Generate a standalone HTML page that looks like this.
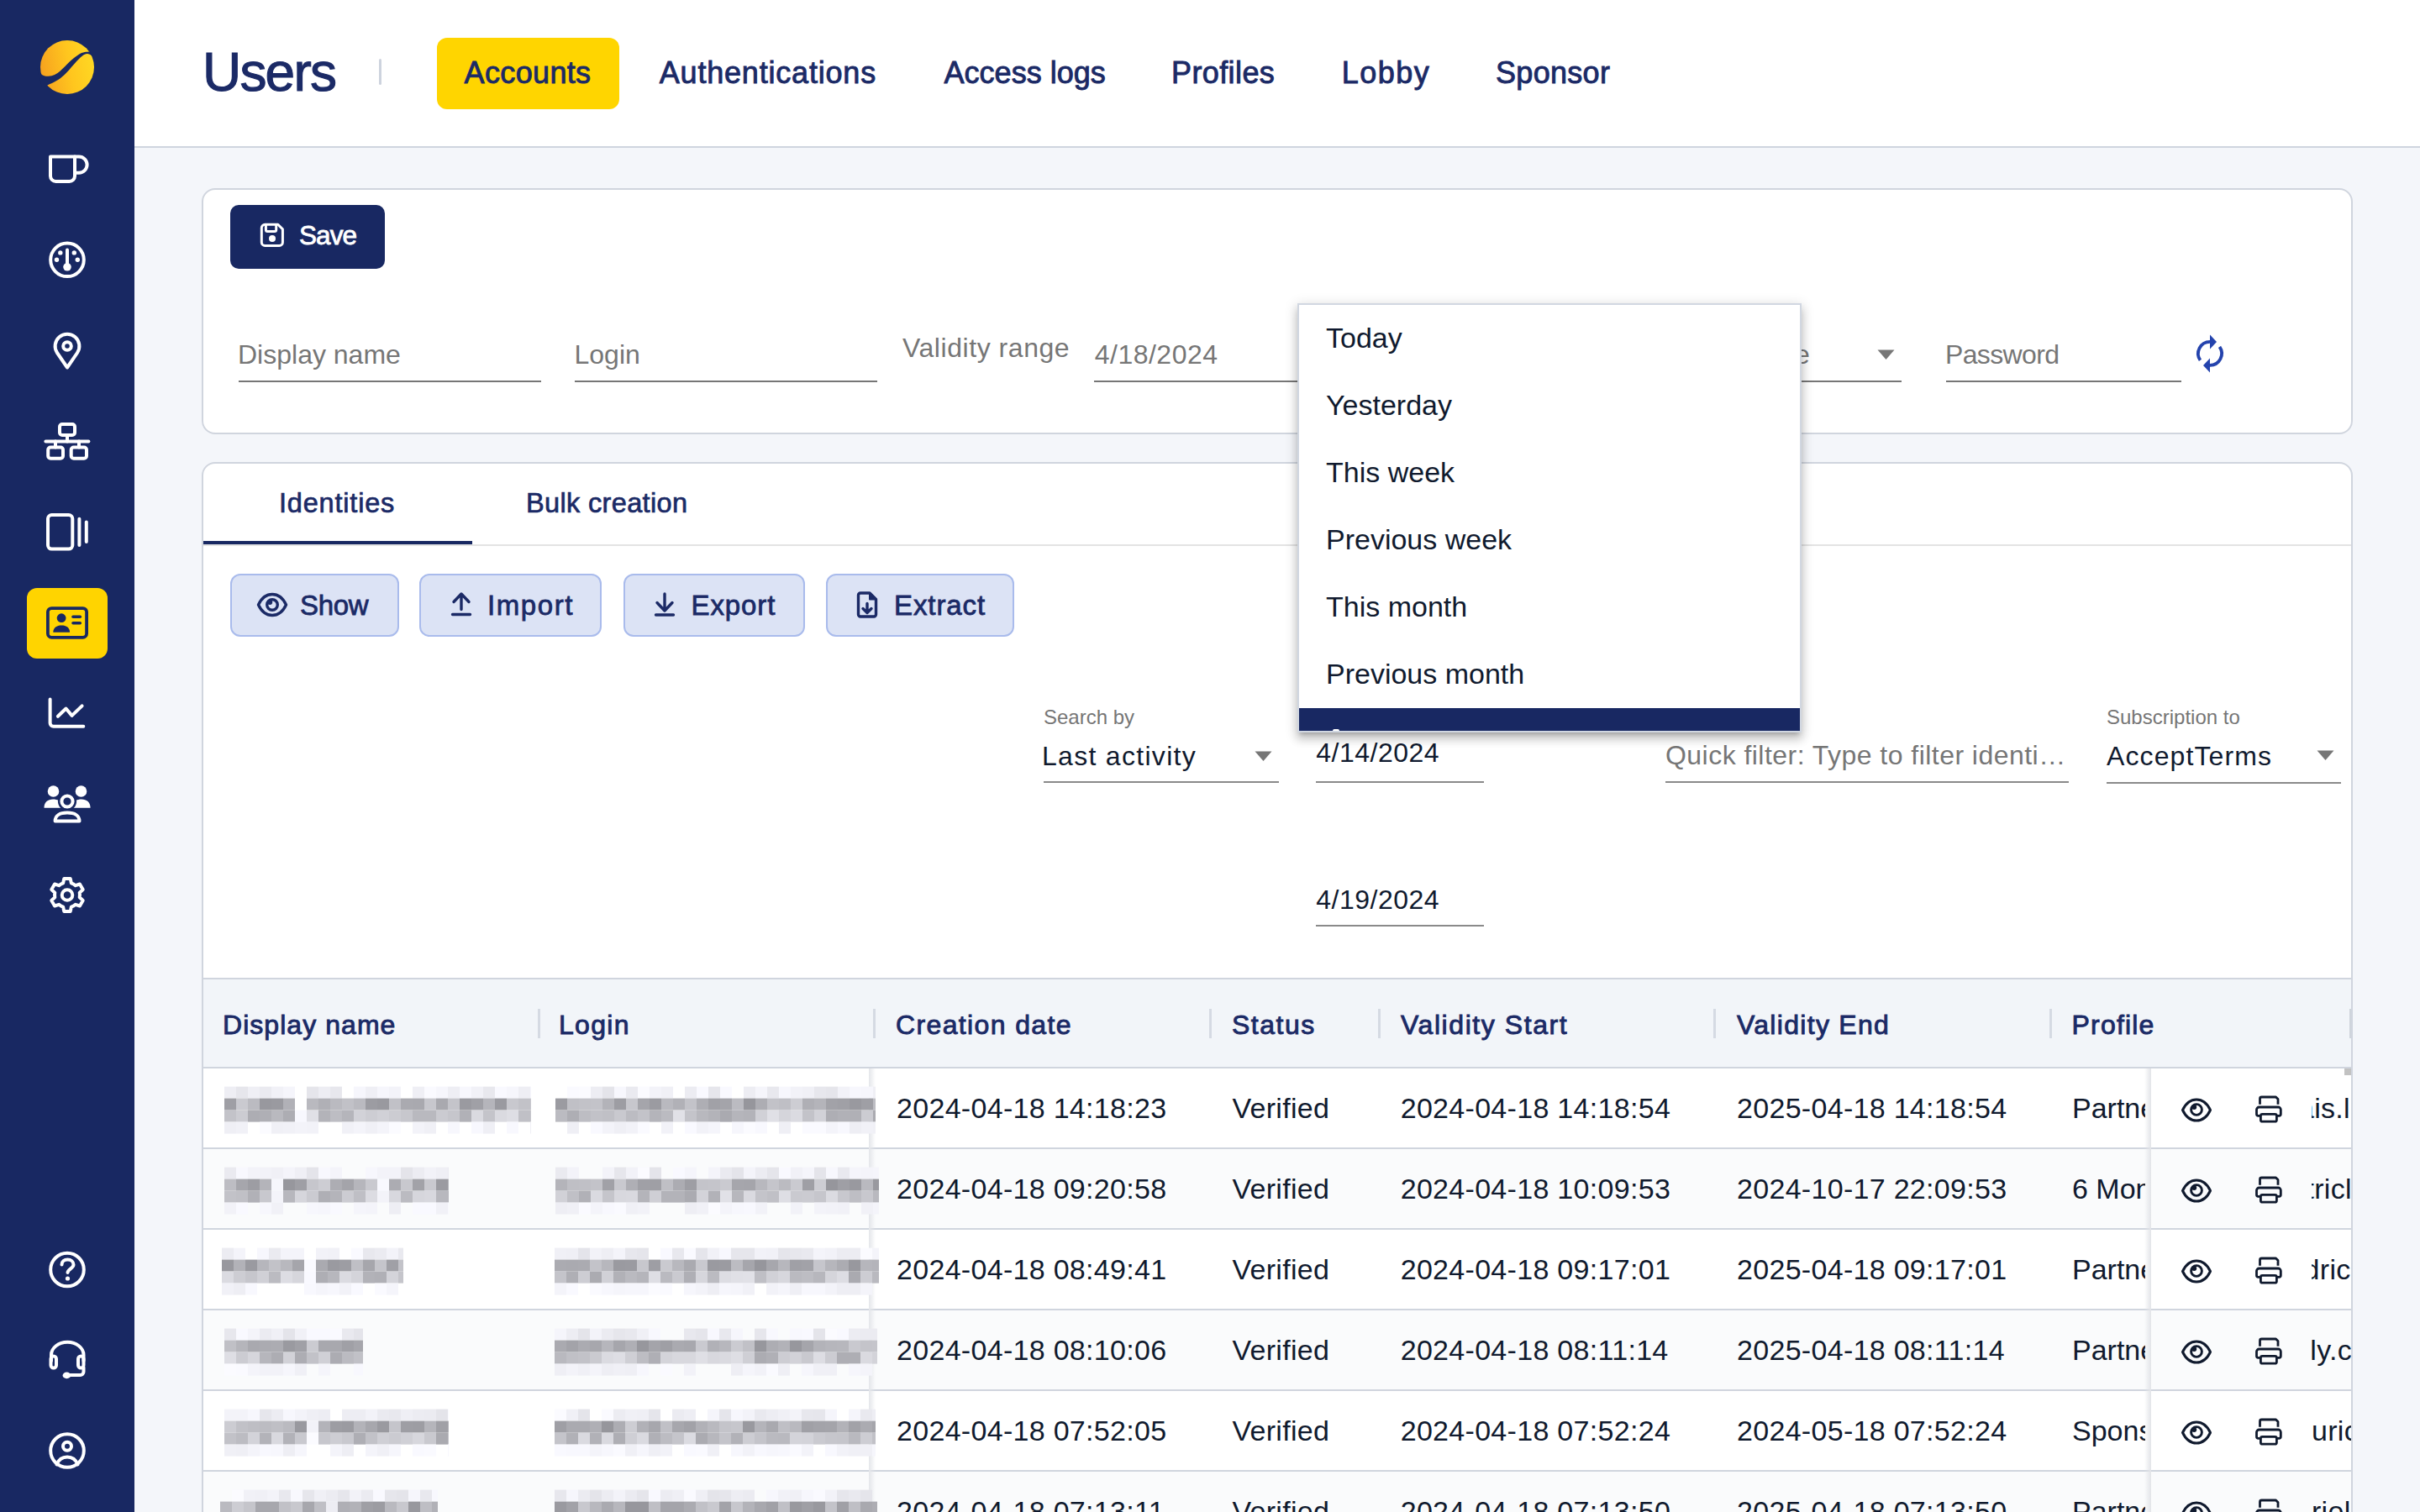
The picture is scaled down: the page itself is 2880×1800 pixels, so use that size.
<!DOCTYPE html>
<html><head><meta charset="utf-8"><style>
html,body{margin:0;padding:0;}
body{width:2880px;height:1800px;position:relative;overflow:hidden;background:#f4f6fa;font-family:"Liberation Sans",sans-serif;}
.t{position:absolute;white-space:nowrap;line-height:1;}
</style></head><body>
<div style="position:absolute;left:0px;top:0px;width:160px;height:1800px;background:#182862"></div>
<svg style="position:absolute;left:0;top:0" width="160" height="1800" viewBox="0 0 160 1800">
<defs><linearGradient id="lg" x1="0" y1="0.6" x2="1" y2="0.4"><stop offset="0" stop-color="#f6a11f"/><stop offset="0.55" stop-color="#ffc61e"/><stop offset="1" stop-color="#ffd823"/></linearGradient></defs>
<circle cx="80" cy="80" r="32" fill="url(#lg)"/>
<path d="M44,81 C47,88 51,91 57.5,90.8 C63,90.5 67.5,88 71.7,84.4 C75.5,81 79,77 82.3,73.9 C86,70.5 89.5,67.5 92.9,65.4 C96,63.5 98.5,62.3 100.8,62 C103,61.7 105,61.5 106.5,61.5 L111,64 L109.3,66.5 C108,65 105.5,64 103.5,64.1 C100.5,64.5 98,66.5 95.6,68.6 C92.5,71.5 90,74.5 87.6,77 C84,81 80.5,85.5 77,88.7 C73.5,92 70,94.5 66.5,96.6 C63,98.6 59.5,100 56.4,101.4 L50,104 Z" fill="#182862"/>
<!-- mug -->
<path d="M60,186.5 H89 V209.5 a6.5,6.5 0 0 1 -6.5,6.5 H66.5 a6.5,6.5 0 0 1 -6.5,-6.5 Z" fill="none" stroke="#fff" stroke-width="4" stroke-linecap="round" stroke-linejoin="round"/>
<path d="M89,186.5 H94 a9.6,9.6 0 0 1 0,19.2 H89" fill="none" stroke="#fff" stroke-width="4" stroke-linecap="round" stroke-linejoin="round"/>
<!-- gauge -->
<circle cx="80" cy="309.3" r="19.8" fill="none" stroke="#fff" stroke-width="4" stroke-linecap="round" stroke-linejoin="round"/>
<line x1="80" y1="297.5" x2="80" y2="316" fill="none" stroke="#fff" stroke-width="4" stroke-linecap="round" stroke-linejoin="round"/>
<circle cx="80" cy="317.8" r="4.8" fill="#fff"/>
<circle cx="71.8" cy="300.9" r="2.7" fill="#fff"/><circle cx="88.3" cy="300.9" r="2.7" fill="#fff"/>
<circle cx="67.5" cy="309.3" r="2.7" fill="#fff"/><circle cx="92.3" cy="309.3" r="2.7" fill="#fff"/>
<!-- pin -->
<path d="M80,437.5 L68,420 A14.4,14.4 0 1 1 92,420 Z" fill="none" stroke="#fff" stroke-width="4" stroke-linecap="round" stroke-linejoin="round"/>
<circle cx="80" cy="412" r="4.8" fill="none" stroke="#fff" stroke-width="4" stroke-linecap="round" stroke-linejoin="round"/>
<!-- network -->
<rect x="71" y="505" width="18" height="13" rx="3" fill="none" stroke="#fff" stroke-width="4" stroke-linecap="round" stroke-linejoin="round"/>
<line x1="80" y1="518" x2="80" y2="525.4" fill="none" stroke="#fff" stroke-width="4" stroke-linecap="round" stroke-linejoin="round"/>
<line x1="54.4" y1="525.4" x2="105.4" y2="525.4" fill="none" stroke="#fff" stroke-width="4" stroke-linecap="round" stroke-linejoin="round"/>
<line x1="66" y1="525.4" x2="66" y2="532.5" fill="none" stroke="#fff" stroke-width="4" stroke-linecap="round" stroke-linejoin="round"/><line x1="94" y1="525.4" x2="94" y2="532.5" fill="none" stroke="#fff" stroke-width="4" stroke-linecap="round" stroke-linejoin="round"/>
<rect x="57.2" y="532.5" width="17.8" height="13.2" rx="3" fill="none" stroke="#fff" stroke-width="4" stroke-linecap="round" stroke-linejoin="round"/>
<rect x="84.7" y="532.5" width="18.3" height="13.2" rx="3" fill="none" stroke="#fff" stroke-width="4" stroke-linecap="round" stroke-linejoin="round"/>
<!-- tablet -->
<rect x="57" y="613" width="29.3" height="40.6" rx="4.5" fill="none" stroke="#fff" stroke-width="4" stroke-linecap="round" stroke-linejoin="round"/>
<line x1="94.4" y1="617.7" x2="94.4" y2="649" fill="none" stroke="#fff" stroke-width="4" stroke-linecap="round" stroke-linejoin="round"/>
<line x1="102.8" y1="621.4" x2="102.8" y2="645" fill="none" stroke="#fff" stroke-width="4" stroke-linecap="round" stroke-linejoin="round"/>
<!-- active -->
<rect x="32" y="700" width="96" height="84" rx="12" fill="#ffd400"/>
<rect x="56.9" y="724.1" width="46.2" height="34.7" rx="4.5" fill="none" stroke="#182862" stroke-width="3.8"/>
<circle cx="73.1" cy="735.7" r="5.4" fill="#182862"/>
<path d="M63.3,752.8 C63.3,747 67.5,744.4 73.2,744.4 C79,744.4 83.1,747 83.1,752.8 Z" fill="#182862"/>
<line x1="87" y1="734.3" x2="95.3" y2="734.3" stroke="#182862" stroke-width="3.6" stroke-linecap="round"/>
<line x1="87" y1="741.7" x2="95.3" y2="741.7" stroke="#182862" stroke-width="3.6" stroke-linecap="round"/>
<!-- chart -->
<path d="M59.6,832.6 V860.7 a4,4 0 0 0 4,4 H99.3" fill="none" stroke="#fff" stroke-width="4" stroke-linecap="round" stroke-linejoin="round"/>
<path d="M68.9,852.8 L78.5,843.5 L85.6,851.9 L97.6,840.4" fill="none" stroke="#fff" stroke-width="4" stroke-linecap="round" stroke-linejoin="round"/>
<!-- people -->
<circle cx="63.5" cy="942" r="6.8" fill="#fff"/><circle cx="96.5" cy="942" r="6.8" fill="#fff"/>
<path d="M52.5,961.7 C52.5,955 57,951.5 63,951.5 C66,951.5 68,952 69.5,953 C70.5,956 72,959.5 73,961.7 Z" fill="#fff"/>
<path d="M107.6,961.7 C107.6,955 103,951.5 97,951.5 C94,951.5 92,952 90.5,953 C89.5,956 88,959.5 87,961.7 Z" fill="#fff"/>
<circle cx="80" cy="954" r="6.6" fill="none" stroke="#182862" stroke-width="9"/><circle cx="80" cy="954" r="6.6" fill="none" stroke="#fff" stroke-width="4" stroke-linecap="round" stroke-linejoin="round"/>
<path d="M65.6,977.5 C65.6,971 71,967.6 80,967.6 C89,967.6 94.5,971 94.5,977.5 Z" fill="none" stroke="#182862" stroke-width="8"/><path d="M65.6,977.5 C65.6,971 71,967.6 80,967.6 C89,967.6 94.5,971 94.5,977.5 Z" fill="none" stroke="#fff" stroke-width="4" stroke-linecap="round" stroke-linejoin="round"/>
<!-- gear -->
<g transform="translate(80,1065.5)"><path d="M-4.88,-14.18 L-3.78,-19.44 L3.78,-19.44 L4.88,-14.18 A15.00,15.00 0 0 1 9.84,-11.32 L14.94,-12.99 L18.72,-6.45 L14.72,-2.86 A15.00,15.00 0 0 1 14.72,2.86 L18.72,6.45 L14.94,12.99 L9.84,11.32 A15.00,15.00 0 0 1 4.88,14.18 L3.78,19.44 L-3.78,19.44 L-4.88,14.18 A15.00,15.00 0 0 1 -9.84,11.32 L-14.94,12.99 L-18.72,6.45 L-14.72,2.86 A15.00,15.00 0 0 1 -14.72,-2.86 L-18.72,-6.45 L-14.94,-12.99 L-9.84,-11.32 A15.00,15.00 0 0 1 -4.88,-14.18 Z" fill="none" stroke="#fff" stroke-width="4" stroke-linecap="round" stroke-linejoin="round"/><circle cx="0" cy="0" r="6.3" fill="none" stroke="#fff" stroke-width="4" stroke-linecap="round" stroke-linejoin="round"/></g>
<!-- help -->
<circle cx="80" cy="1511.5" r="19.8" fill="none" stroke="#fff" stroke-width="4" stroke-linecap="round" stroke-linejoin="round"/>
<path d="M73.5,1505.5 C73.5,1501.5 76.5,1499.5 80.5,1499.5 C84.5,1499.5 87.5,1502 87.5,1505.5 C87.5,1510 81,1510.5 80.5,1515" fill="none" stroke="#fff" stroke-width="4" stroke-linecap="round" stroke-linejoin="round" stroke-width="3.8"/>
<circle cx="80.5" cy="1522" r="2.6" fill="#fff"/>
<!-- headset -->
<path d="M61,1620 V1613 A19,15 0 0 1 99.5,1613 V1620" fill="none" stroke="#fff" stroke-width="4" stroke-linecap="round" stroke-linejoin="round"/>
<rect x="60.5" y="1614.5" width="6.5" height="14" rx="3.2" fill="none" stroke="#fff" stroke-width="4" stroke-linecap="round" stroke-linejoin="round"/>
<rect x="93" y="1614.5" width="6.5" height="14" rx="3.2" fill="none" stroke="#fff" stroke-width="4" stroke-linecap="round" stroke-linejoin="round"/>
<path d="M99.5,1628 V1633 a4,4 0 0 1 -4,4 H82" fill="none" stroke="#fff" stroke-width="4" stroke-linecap="round" stroke-linejoin="round"/>
<ellipse cx="79.4" cy="1637.4" rx="4.8" ry="3.8" fill="#fff"/>
<!-- user -->
<circle cx="80" cy="1727" r="19.8" fill="none" stroke="#fff" stroke-width="4" stroke-linecap="round" stroke-linejoin="round"/>
<circle cx="80" cy="1721.7" r="5" fill="none" stroke="#fff" stroke-width="4" stroke-linecap="round" stroke-linejoin="round"/>
<path d="M67.5,1743.5 C70,1737 74,1734.5 80,1734.5 C86,1734.5 90,1737 92.5,1743.5" fill="none" stroke="#fff" stroke-width="4" stroke-linecap="round" stroke-linejoin="round"/>
</svg>
<div style="position:absolute;left:160px;top:0px;width:2720px;height:174px;background:#fff"></div>
<div style="position:absolute;left:160px;top:174px;width:2720px;height:2px;background:#cfd5df"></div>
<div class="t " style="left:241px;top:53.8px;font-size:64px;color:#1b2a66;font-weight:400;letter-spacing:-1.8px;-webkit-text-stroke:1.1px #1b2a66">Users</div>
<div style="position:absolute;left:451px;top:70px;width:3px;height:31px;background:#cdd3de;border-radius:2px"></div>
<div style="position:absolute;left:520px;top:45px;width:217px;height:85px;background:#ffd500;border-radius:12px"></div>
<div class="t " style="left:552.6px;top:68.5px;font-size:36px;color:#1b2a66;font-weight:400;-webkit-text-stroke:0.9px #1b2a66;letter-spacing:0.35px">Accounts</div>
<div class="t " style="left:784.8px;top:68.5px;font-size:36px;color:#1b2a66;font-weight:400;-webkit-text-stroke:0.9px #1b2a66;letter-spacing:0.8px">Authentications</div>
<div class="t " style="left:1123.6px;top:68.5px;font-size:36px;color:#1b2a66;font-weight:400;-webkit-text-stroke:0.9px #1b2a66;letter-spacing:0px">Access logs</div>
<div class="t " style="left:1394px;top:68.5px;font-size:36px;color:#1b2a66;font-weight:400;-webkit-text-stroke:0.9px #1b2a66;letter-spacing:0.4px">Profiles</div>
<div class="t " style="left:1596.7px;top:68.5px;font-size:36px;color:#1b2a66;font-weight:400;-webkit-text-stroke:0.9px #1b2a66;letter-spacing:1.5px">Lobby</div>
<div class="t " style="left:1780px;top:68.5px;font-size:36px;color:#1b2a66;font-weight:400;-webkit-text-stroke:0.9px #1b2a66;letter-spacing:0.3px">Sponsor</div>
<div style="position:absolute;left:160px;top:176px;width:2720px;height:1624px;background:#f4f6fa"></div>
<div style="position:absolute;left:240px;top:224px;width:2560px;height:293px;background:#fff;border:2px solid #d0d5de;border-radius:16px;box-sizing:border-box"></div>
<div style="position:absolute;left:274px;top:244px;width:184px;height:76px;background:#182862;border-radius:10px"></div>
<svg style="position:absolute;left:300px;top:256px" width="50" height="48" viewBox="0 0 50 48"><path d="M15.3,11.3 H30.8 L36.4,16.9 V32.4 a4,4 0 0 1 -4,4 H15.3 a4,4 0 0 1 -4,-4 V15.3 a4,4 0 0 1 4,-4 Z" fill="none" stroke="#fff" stroke-width="3" stroke-linejoin="round"/><path d="M16.4,11.3 V17.5 a2,2 0 0 0 2,2 H26.7 a2,2 0 0 0 2,-2 V11.3" fill="none" stroke="#fff" stroke-width="3"/><circle cx="24" cy="27.9" r="4" fill="#fff"/></svg>
<div class="t " style="left:356px;top:265.3px;font-size:31.5px;color:#fff;font-weight:400;letter-spacing:-0.9px;-webkit-text-stroke:0.8px #fff">Save</div>
<div class="t " style="left:283px;top:405.9px;font-size:32px;color:#767676;font-weight:400;">Display name</div>
<div style="position:absolute;left:284px;top:453px;width:360px;height:2px;background:#767676"></div>
<div class="t " style="left:683.5px;top:405.9px;font-size:32px;color:#767676;font-weight:400;">Login</div>
<div style="position:absolute;left:684px;top:453px;width:360px;height:2px;background:#767676"></div>
<div class="t " style="left:1074px;top:397.5px;font-size:32px;color:#767676;font-weight:400;letter-spacing:0.55px">Validity range</div>
<div class="t " style="left:1302.7px;top:405.9px;font-size:32px;color:#767676;font-weight:400;letter-spacing:0.5px">4/18/2024</div>
<div style="position:absolute;left:1302px;top:453px;width:258px;height:2px;background:#767676"></div>
<div class="t " style="left:2136px;top:405.9px;font-size:32px;color:#767676;font-weight:400;">e</div>
<div style="position:absolute;left:2120px;top:453px;width:143px;height:2px;background:#767676"></div>
<svg style="position:absolute;left:2234px;top:416px" width="22" height="13"><path d="M0.5,0.5 H20.5 L10.5,12 Z" fill="#767676"/></svg>
<div class="t " style="left:2315px;top:406.4px;font-size:32px;color:#767676;font-weight:400;letter-spacing:-0.65px">Password</div>
<div style="position:absolute;left:2316px;top:453px;width:280px;height:2px;background:#767676"></div>
<svg style="position:absolute;left:2600px;top:390px" width="60" height="60" viewBox="0 0 60 60"><g fill="none" stroke="#2443ad" stroke-width="3.8"><path d="M18.5,38.8 A14,14 0 0 1 30,16.8"/><path d="M41.5,22.8 A14,14 0 0 1 30,44.8"/></g><path d="M30,8.5 L38,17 L30,25.5 Z" fill="#2443ad"/><path d="M30,36.5 L22,45 L30,53.5 Z" fill="#2443ad"/></svg>
<div style="position:absolute;left:240px;top:550px;width:2560px;height:1350px;background:#fff;border:2px solid #d0d5de;border-radius:16px;box-sizing:border-box"></div>
<div class="t " style="left:332px;top:582.8px;font-size:32.5px;color:#1b2a66;font-weight:400;-webkit-text-stroke:0.7px #1b2a66;letter-spacing:0.8px">Identities</div>
<div class="t " style="left:626px;top:582.8px;font-size:32.5px;color:#1b2a66;font-weight:400;-webkit-text-stroke:0.7px #1b2a66;letter-spacing:0.35px">Bulk creation</div>
<div style="position:absolute;left:242px;top:648px;width:2556px;height:2px;background:#e3e3e3"></div>
<div style="position:absolute;left:242px;top:644px;width:320px;height:4px;background:#182862"></div>
<div style="position:absolute;left:274px;top:683px;width:201px;height:75px;background:#dce3f5;border:2px solid #a9bbec;border-radius:12px;box-sizing:border-box"></div>
<div class="t " style="left:357px;top:704.2px;font-size:33px;color:#1b2a66;font-weight:400;letter-spacing:-0.3px;-webkit-text-stroke:0.8px #1b2a66">Show</div>
<div style="position:absolute;left:499px;top:683px;width:217px;height:75px;background:#dce3f5;border:2px solid #a9bbec;border-radius:12px;box-sizing:border-box"></div>
<div class="t " style="left:580px;top:704.2px;font-size:33px;color:#1b2a66;font-weight:400;letter-spacing:1.5999999999999999px;-webkit-text-stroke:0.8px #1b2a66">Import</div>
<div style="position:absolute;left:742px;top:683px;width:216px;height:75px;background:#dce3f5;border:2px solid #a9bbec;border-radius:12px;box-sizing:border-box"></div>
<div class="t " style="left:822.5px;top:704.2px;font-size:33px;color:#1b2a66;font-weight:400;letter-spacing:0.8999999999999999px;-webkit-text-stroke:0.8px #1b2a66">Export</div>
<div style="position:absolute;left:983px;top:683px;width:224px;height:75px;background:#dce3f5;border:2px solid #a9bbec;border-radius:12px;box-sizing:border-box"></div>
<div class="t " style="left:1064px;top:704.2px;font-size:33px;color:#1b2a66;font-weight:400;letter-spacing:0.8999999999999999px;-webkit-text-stroke:0.8px #1b2a66">Extract</div>
<svg style="position:absolute;left:0;top:0" width="1300" height="800" viewBox="0 0 1300 800">
<path d="M307.5,720 C311,712.5 317,707.5 324,707.5 C331,707.5 337,712.5 340.5,720 C337,727.5 331,732.5 324,732.5 C317,732.5 311,727.5 307.5,720 Z" fill="none" stroke="#1b2a66" stroke-width="3.4" stroke-linecap="round" stroke-linejoin="round"/>
<circle cx="324" cy="720" r="6.3" fill="none" stroke="#1b2a66" stroke-width="3.4" stroke-linecap="round" stroke-linejoin="round"/><circle cx="321.2" cy="717" r="3" fill="#1b2a66"/>
<path d="M540,716.5 L549,707 L558,716.5 M549,707.5 V725.5 M538.5,731.5 H559.5" fill="none" stroke="#1b2a66" stroke-width="3.4" stroke-linecap="round" stroke-linejoin="round"/>
<path d="M782,717.5 L791,727 L800,717.5 M791,707 V726.5 M780.5,732 H801.5" fill="none" stroke="#1b2a66" stroke-width="3.4" stroke-linecap="round" stroke-linejoin="round"/>
<path d="M1024,706 H1035 L1042.5,713.5 V731.5 a2.5,2.5 0 0 1 -2.5,2.5 H1024 a2.5,2.5 0 0 1 -2.5,-2.5 V708.5 a2.5,2.5 0 0 1 2.5,-2.5 Z" fill="none" stroke="#1b2a66" stroke-width="3.4" stroke-linecap="round" stroke-linejoin="round" stroke-width="3.3"/>
<path d="M1035,706 L1042.5,713.5 H1035 Z" fill="#1b2a66" stroke="#1b2a66" stroke-width="2" stroke-linejoin="round"/>
<path d="M1032,718.5 V729 M1027,724.5 L1032,729.5 L1037,724.5" fill="none" stroke="#1b2a66" stroke-width="3.4" stroke-linecap="round" stroke-linejoin="round" stroke-width="3"/>
</svg>
<div class="t " style="left:1242px;top:841.7px;font-size:24px;color:#767676;font-weight:400;">Search by</div>
<div class="t " style="left:1240px;top:883.6px;font-size:32px;color:#101a2e;font-weight:400;letter-spacing:1.3px">Last activity</div>
<svg style="position:absolute;left:1493px;top:894px" width="22" height="13"><path d="M0.5,0.5 H20.5 L10.5,12 Z" fill="#767676"/></svg>
<div style="position:absolute;left:1242px;top:930px;width:280px;height:2px;background:#8a8a8a"></div>
<div class="t " style="left:1566.3px;top:880.3px;font-size:32px;color:#101a2e;font-weight:400;letter-spacing:0.5px">4/14/2024</div>
<div style="position:absolute;left:1566px;top:930px;width:200px;height:2px;background:#8a8a8a"></div>
<div class="t " style="left:1566.3px;top:1054.9px;font-size:32px;color:#101a2e;font-weight:400;letter-spacing:0.5px">4/19/2024</div>
<div style="position:absolute;left:1566px;top:1101px;width:200px;height:2px;background:#8a8a8a"></div>
<div class="t " style="left:1982px;top:883.4px;font-size:32px;color:#767676;font-weight:400;letter-spacing:0.46px">Quick filter: Type to filter identi…</div>
<div style="position:absolute;left:1982px;top:929.5px;width:480px;height:2.0px;background:#8a8a8a"></div>
<div class="t " style="left:2507px;top:842.3px;font-size:24px;color:#767676;font-weight:400;">Subscription to</div>
<div class="t " style="left:2507px;top:883.9px;font-size:32px;color:#101a2e;font-weight:400;letter-spacing:1.1px">AcceptTerms</div>
<svg style="position:absolute;left:2757px;top:893px" width="22" height="13"><path d="M0.5,0.5 H20.5 L10.5,12 Z" fill="#767676"/></svg>
<div style="position:absolute;left:2507px;top:930.5px;width:279px;height:2.0px;background:#8a8a8a"></div>
<div style="position:absolute;left:242px;top:1164px;width:2556px;height:2px;background:#d0d5de"></div>
<div style="position:absolute;left:242px;top:1166px;width:2556px;height:104px;background:#f2f5f9"></div>
<div style="position:absolute;left:242px;top:1270px;width:2556px;height:2px;background:#d0d5de"></div>
<div class="t " style="left:265px;top:1203.9px;font-size:32px;color:#1b2a66;font-weight:400;letter-spacing:1.05px;-webkit-text-stroke:0.9px #1b2a66">Display name</div>
<div class="t " style="left:665px;top:1203.9px;font-size:32px;color:#1b2a66;font-weight:400;letter-spacing:1.3px;-webkit-text-stroke:0.9px #1b2a66">Login</div>
<div class="t " style="left:1066px;top:1203.9px;font-size:32px;color:#1b2a66;font-weight:400;letter-spacing:1.37px;-webkit-text-stroke:0.9px #1b2a66">Creation date</div>
<div class="t " style="left:1466px;top:1203.9px;font-size:32px;color:#1b2a66;font-weight:400;letter-spacing:1.5px;-webkit-text-stroke:0.9px #1b2a66">Status</div>
<div class="t " style="left:1667px;top:1203.9px;font-size:32px;color:#1b2a66;font-weight:400;letter-spacing:1.57px;-webkit-text-stroke:0.9px #1b2a66">Validity Start</div>
<div class="t " style="left:2067px;top:1203.9px;font-size:32px;color:#1b2a66;font-weight:400;letter-spacing:1.3px;-webkit-text-stroke:0.9px #1b2a66">Validity End</div>
<div class="t " style="left:2465.5px;top:1203.9px;font-size:32px;color:#1b2a66;font-weight:400;letter-spacing:1.2px;-webkit-text-stroke:0.9px #1b2a66">Profile</div>
<div style="position:absolute;left:640px;top:1201px;width:3px;height:35px;background:#d5dae3"></div>
<div style="position:absolute;left:1039px;top:1201px;width:3px;height:35px;background:#d5dae3"></div>
<div style="position:absolute;left:1439px;top:1201px;width:3px;height:35px;background:#d5dae3"></div>
<div style="position:absolute;left:1640px;top:1201px;width:3px;height:35px;background:#d5dae3"></div>
<div style="position:absolute;left:2039px;top:1201px;width:3px;height:35px;background:#d5dae3"></div>
<div style="position:absolute;left:2439px;top:1201px;width:3px;height:35px;background:#d5dae3"></div>
<div style="position:absolute;left:2796px;top:1201px;width:2px;height:35px;background:#cfd4dc"></div>
<div style="position:absolute;left:242px;top:1272px;width:2556px;height:94px;background:#ffffff"></div>
<div style="position:absolute;left:242px;top:1366px;width:2556px;height:2px;background:#d0d5de"></div>
<div class="t " style="left:1067px;top:1301.8px;font-size:34px;color:#101a2e;font-weight:400;letter-spacing:0.3px">2024-04-18 14:18:23</div>
<div class="t " style="left:1466.4px;top:1301.8px;font-size:34px;color:#101a2e;font-weight:400;letter-spacing:0.3px">Verified</div>
<div class="t " style="left:1666.7px;top:1301.8px;font-size:34px;color:#101a2e;font-weight:400;letter-spacing:0.3px">2024-04-18 14:18:54</div>
<div class="t " style="left:2067px;top:1301.8px;font-size:34px;color:#101a2e;font-weight:400;letter-spacing:0.3px">2025-04-18 14:18:54</div>
<div style="position:absolute;left:2460px;top:1291.8px;width:92.5px;height:54px;overflow:hidden;"><div class="t" style="left:6px;top:10px;font-size:34px;color:#101a2e;letter-spacing:0px">Partner</div></div>
<div style="position:absolute;left:2751px;top:1291.8px;width:47px;height:54px;overflow:hidden;"><div class="t" style="left:-16px;top:10px;font-size:34px;color:#101a2e;letter-spacing:0.3px">ais.l</div></div>
<div style="position:absolute;left:242px;top:1368px;width:2556px;height:94px;background:#fafbfc"></div>
<div style="position:absolute;left:242px;top:1462px;width:2556px;height:2px;background:#d0d5de"></div>
<div class="t " style="left:1067px;top:1397.8px;font-size:34px;color:#101a2e;font-weight:400;letter-spacing:0.3px">2024-04-18 09:20:58</div>
<div class="t " style="left:1466.4px;top:1397.8px;font-size:34px;color:#101a2e;font-weight:400;letter-spacing:0.3px">Verified</div>
<div class="t " style="left:1666.7px;top:1397.8px;font-size:34px;color:#101a2e;font-weight:400;letter-spacing:0.3px">2024-04-18 10:09:53</div>
<div class="t " style="left:2067px;top:1397.8px;font-size:34px;color:#101a2e;font-weight:400;letter-spacing:0.3px">2024-10-17 22:09:53</div>
<div style="position:absolute;left:2460px;top:1387.8px;width:92.5px;height:54px;overflow:hidden;"><div class="t" style="left:6px;top:10px;font-size:34px;color:#101a2e;letter-spacing:0px">6 Months</div></div>
<div style="position:absolute;left:2751px;top:1387.8px;width:47px;height:54px;overflow:hidden;"><div class="t" style="left:-6.5px;top:10px;font-size:34px;color:#101a2e;letter-spacing:0.3px">tricl</div></div>
<div style="position:absolute;left:242px;top:1464px;width:2556px;height:94px;background:#ffffff"></div>
<div style="position:absolute;left:242px;top:1558px;width:2556px;height:2px;background:#d0d5de"></div>
<div class="t " style="left:1067px;top:1493.8px;font-size:34px;color:#101a2e;font-weight:400;letter-spacing:0.3px">2024-04-18 08:49:41</div>
<div class="t " style="left:1466.4px;top:1493.8px;font-size:34px;color:#101a2e;font-weight:400;letter-spacing:0.3px">Verified</div>
<div class="t " style="left:1666.7px;top:1493.8px;font-size:34px;color:#101a2e;font-weight:400;letter-spacing:0.3px">2024-04-18 09:17:01</div>
<div class="t " style="left:2067px;top:1493.8px;font-size:34px;color:#101a2e;font-weight:400;letter-spacing:0.3px">2025-04-18 09:17:01</div>
<div style="position:absolute;left:2460px;top:1483.8px;width:92.5px;height:54px;overflow:hidden;"><div class="t" style="left:6px;top:10px;font-size:34px;color:#101a2e;letter-spacing:0px">Partner</div></div>
<div style="position:absolute;left:2751px;top:1483.8px;width:47px;height:54px;overflow:hidden;"><div class="t" style="left:-9.4px;top:10px;font-size:34px;color:#101a2e;letter-spacing:0.3px">dric</div></div>
<div style="position:absolute;left:242px;top:1560px;width:2556px;height:94px;background:#fafbfc"></div>
<div style="position:absolute;left:242px;top:1654px;width:2556px;height:2px;background:#d0d5de"></div>
<div class="t " style="left:1067px;top:1589.8px;font-size:34px;color:#101a2e;font-weight:400;letter-spacing:0.3px">2024-04-18 08:10:06</div>
<div class="t " style="left:1466.4px;top:1589.8px;font-size:34px;color:#101a2e;font-weight:400;letter-spacing:0.3px">Verified</div>
<div class="t " style="left:1666.7px;top:1589.8px;font-size:34px;color:#101a2e;font-weight:400;letter-spacing:0.3px">2024-04-18 08:11:14</div>
<div class="t " style="left:2067px;top:1589.8px;font-size:34px;color:#101a2e;font-weight:400;letter-spacing:0.3px">2025-04-18 08:11:14</div>
<div style="position:absolute;left:2460px;top:1579.8px;width:92.5px;height:54px;overflow:hidden;"><div class="t" style="left:6px;top:10px;font-size:34px;color:#101a2e;letter-spacing:0px">Partner</div></div>
<div style="position:absolute;left:2751px;top:1579.8px;width:47px;height:54px;overflow:hidden;"><div class="t" style="left:-1.7px;top:10px;font-size:34px;color:#101a2e;letter-spacing:0.3px">ly.c</div></div>
<div style="position:absolute;left:242px;top:1656px;width:2556px;height:94px;background:#ffffff"></div>
<div style="position:absolute;left:242px;top:1750px;width:2556px;height:2px;background:#d0d5de"></div>
<div class="t " style="left:1067px;top:1685.8px;font-size:34px;color:#101a2e;font-weight:400;letter-spacing:0.3px">2024-04-18 07:52:05</div>
<div class="t " style="left:1466.4px;top:1685.8px;font-size:34px;color:#101a2e;font-weight:400;letter-spacing:0.3px">Verified</div>
<div class="t " style="left:1666.7px;top:1685.8px;font-size:34px;color:#101a2e;font-weight:400;letter-spacing:0.3px">2024-04-18 07:52:24</div>
<div class="t " style="left:2067px;top:1685.8px;font-size:34px;color:#101a2e;font-weight:400;letter-spacing:0.3px">2024-05-18 07:52:24</div>
<div style="position:absolute;left:2460px;top:1675.8px;width:92.5px;height:54px;overflow:hidden;"><div class="t" style="left:6px;top:10px;font-size:34px;color:#101a2e;letter-spacing:0px">Sponsor</div></div>
<div style="position:absolute;left:2751px;top:1675.8px;width:47px;height:54px;overflow:hidden;"><div class="t" style="left:0px;top:10px;font-size:34px;color:#101a2e;letter-spacing:0.3px">uric</div></div>
<div style="position:absolute;left:242px;top:1752px;width:2556px;height:94px;background:#fafbfc"></div>
<div style="position:absolute;left:242px;top:1846px;width:2556px;height:2px;background:#d0d5de"></div>
<div class="t " style="left:1067px;top:1781.8px;font-size:34px;color:#101a2e;font-weight:400;letter-spacing:0.3px">2024-04-18 07:13:11</div>
<div class="t " style="left:1466.4px;top:1781.8px;font-size:34px;color:#101a2e;font-weight:400;letter-spacing:0.3px">Verified</div>
<div class="t " style="left:1666.7px;top:1781.8px;font-size:34px;color:#101a2e;font-weight:400;letter-spacing:0.3px">2024-04-18 07:13:50</div>
<div class="t " style="left:2067px;top:1781.8px;font-size:34px;color:#101a2e;font-weight:400;letter-spacing:0.3px">2025-04-18 07:13:50</div>
<div style="position:absolute;left:2460px;top:1771.8px;width:92.5px;height:54px;overflow:hidden;"><div class="t" style="left:6px;top:10px;font-size:34px;color:#101a2e;letter-spacing:0px">Partner</div></div>
<div style="position:absolute;left:2751px;top:1771.8px;width:47px;height:54px;overflow:hidden;"><div class="t" style="left:0px;top:10px;font-size:34px;color:#101a2e;letter-spacing:0.3px">riel</div></div>
<div style="position:absolute;left:1034px;top:1272px;width:8px;height:528px;background:linear-gradient(to right,#e4e6ea,rgba(255,255,255,0))"></div>
<div style="position:absolute;left:2552px;top:1272px;width:8px;height:528px;background:linear-gradient(to right,rgba(228,230,234,0),#e2e4e8)"></div>
<div style="position:absolute;left:2790px;top:1272px;width:8px;height:8px;background:#c2c2c2"></div>
<svg style="position:absolute;left:0;top:0" width="2880" height="1800"><path d="M2597.5,1321.5 C2601,1314.0 2607,1309.0 2614,1309.0 C2621,1309.0 2627,1314.0 2630.5,1321.5 C2627,1329.0 2621,1334.0 2614,1334.0 C2607,1334.0 2601,1329.0 2597.5,1321.5 Z" fill="none" stroke="#101a2e" stroke-width="3" stroke-linejoin="round"/><circle cx="2614" cy="1321.0" r="6.4" fill="none" stroke="#101a2e" stroke-width="2.9"/><circle cx="2611.2" cy="1318.0" r="3" fill="#101a2e"/><path d="M2689.5,1314.8 V1308.0 a2,2 0 0 1 2,-2 H2708.5 L2711,1308.5 V1314.8 M2689.5,1328.3 H2687.5 a2,2 0 0 1 -2,-2 V1321.0 a3,3 0 0 1 3,-3 H2711.3 a3,3 0 0 1 3,3 V1326.3 a2,2 0 0 1 -2,2 H2710" fill="none" stroke="#101a2e" stroke-width="2.8" stroke-linejoin="round"/><rect x="2690.4" y="1326.4" width="19" height="8.8" rx="2" fill="none" stroke="#101a2e" stroke-width="2.8"/><path d="M2597.5,1417.5 C2601,1410.0 2607,1405.0 2614,1405.0 C2621,1405.0 2627,1410.0 2630.5,1417.5 C2627,1425.0 2621,1430.0 2614,1430.0 C2607,1430.0 2601,1425.0 2597.5,1417.5 Z" fill="none" stroke="#101a2e" stroke-width="3" stroke-linejoin="round"/><circle cx="2614" cy="1417.0" r="6.4" fill="none" stroke="#101a2e" stroke-width="2.9"/><circle cx="2611.2" cy="1414.0" r="3" fill="#101a2e"/><path d="M2689.5,1410.8 V1404.0 a2,2 0 0 1 2,-2 H2708.5 L2711,1404.5 V1410.8 M2689.5,1424.3 H2687.5 a2,2 0 0 1 -2,-2 V1417.0 a3,3 0 0 1 3,-3 H2711.3 a3,3 0 0 1 3,3 V1422.3 a2,2 0 0 1 -2,2 H2710" fill="none" stroke="#101a2e" stroke-width="2.8" stroke-linejoin="round"/><rect x="2690.4" y="1422.4" width="19" height="8.8" rx="2" fill="none" stroke="#101a2e" stroke-width="2.8"/><path d="M2597.5,1513.5 C2601,1506.0 2607,1501.0 2614,1501.0 C2621,1501.0 2627,1506.0 2630.5,1513.5 C2627,1521.0 2621,1526.0 2614,1526.0 C2607,1526.0 2601,1521.0 2597.5,1513.5 Z" fill="none" stroke="#101a2e" stroke-width="3" stroke-linejoin="round"/><circle cx="2614" cy="1513.0" r="6.4" fill="none" stroke="#101a2e" stroke-width="2.9"/><circle cx="2611.2" cy="1510.0" r="3" fill="#101a2e"/><path d="M2689.5,1506.8 V1500.0 a2,2 0 0 1 2,-2 H2708.5 L2711,1500.5 V1506.8 M2689.5,1520.3 H2687.5 a2,2 0 0 1 -2,-2 V1513.0 a3,3 0 0 1 3,-3 H2711.3 a3,3 0 0 1 3,3 V1518.3 a2,2 0 0 1 -2,2 H2710" fill="none" stroke="#101a2e" stroke-width="2.8" stroke-linejoin="round"/><rect x="2690.4" y="1518.4" width="19" height="8.8" rx="2" fill="none" stroke="#101a2e" stroke-width="2.8"/><path d="M2597.5,1609.5 C2601,1602.0 2607,1597.0 2614,1597.0 C2621,1597.0 2627,1602.0 2630.5,1609.5 C2627,1617.0 2621,1622.0 2614,1622.0 C2607,1622.0 2601,1617.0 2597.5,1609.5 Z" fill="none" stroke="#101a2e" stroke-width="3" stroke-linejoin="round"/><circle cx="2614" cy="1609.0" r="6.4" fill="none" stroke="#101a2e" stroke-width="2.9"/><circle cx="2611.2" cy="1606.0" r="3" fill="#101a2e"/><path d="M2689.5,1602.8 V1596.0 a2,2 0 0 1 2,-2 H2708.5 L2711,1596.5 V1602.8 M2689.5,1616.3 H2687.5 a2,2 0 0 1 -2,-2 V1609.0 a3,3 0 0 1 3,-3 H2711.3 a3,3 0 0 1 3,3 V1614.3 a2,2 0 0 1 -2,2 H2710" fill="none" stroke="#101a2e" stroke-width="2.8" stroke-linejoin="round"/><rect x="2690.4" y="1614.4" width="19" height="8.8" rx="2" fill="none" stroke="#101a2e" stroke-width="2.8"/><path d="M2597.5,1705.5 C2601,1698.0 2607,1693.0 2614,1693.0 C2621,1693.0 2627,1698.0 2630.5,1705.5 C2627,1713.0 2621,1718.0 2614,1718.0 C2607,1718.0 2601,1713.0 2597.5,1705.5 Z" fill="none" stroke="#101a2e" stroke-width="3" stroke-linejoin="round"/><circle cx="2614" cy="1705.0" r="6.4" fill="none" stroke="#101a2e" stroke-width="2.9"/><circle cx="2611.2" cy="1702.0" r="3" fill="#101a2e"/><path d="M2689.5,1698.8 V1692.0 a2,2 0 0 1 2,-2 H2708.5 L2711,1692.5 V1698.8 M2689.5,1712.3 H2687.5 a2,2 0 0 1 -2,-2 V1705.0 a3,3 0 0 1 3,-3 H2711.3 a3,3 0 0 1 3,3 V1710.3 a2,2 0 0 1 -2,2 H2710" fill="none" stroke="#101a2e" stroke-width="2.8" stroke-linejoin="round"/><rect x="2690.4" y="1710.4" width="19" height="8.8" rx="2" fill="none" stroke="#101a2e" stroke-width="2.8"/><path d="M2597.5,1801.5 C2601,1794.0 2607,1789.0 2614,1789.0 C2621,1789.0 2627,1794.0 2630.5,1801.5 C2627,1809.0 2621,1814.0 2614,1814.0 C2607,1814.0 2601,1809.0 2597.5,1801.5 Z" fill="none" stroke="#101a2e" stroke-width="3" stroke-linejoin="round"/><circle cx="2614" cy="1801.0" r="6.4" fill="none" stroke="#101a2e" stroke-width="2.9"/><circle cx="2611.2" cy="1798.0" r="3" fill="#101a2e"/><path d="M2689.5,1794.8 V1788.0 a2,2 0 0 1 2,-2 H2708.5 L2711,1788.5 V1794.8 M2689.5,1808.3 H2687.5 a2,2 0 0 1 -2,-2 V1801.0 a3,3 0 0 1 3,-3 H2711.3 a3,3 0 0 1 3,3 V1806.3 a2,2 0 0 1 -2,2 H2710" fill="none" stroke="#101a2e" stroke-width="2.8" stroke-linejoin="round"/><rect x="2690.4" y="1806.4" width="19" height="8.8" rx="2" fill="none" stroke="#101a2e" stroke-width="2.8"/></svg>
<svg style="position:absolute;left:0;top:0" width="2880" height="1800"><rect x="267" y="1293.6" width="14" height="14" fill="rgb(238,238,244)"/><rect x="267" y="1307.6" width="14" height="14" fill="rgb(159,159,165)"/><rect x="267" y="1321.6" width="14" height="14" fill="rgb(195,195,201)"/><rect x="267" y="1335.6" width="14" height="14" fill="rgb(239,239,245)"/><rect x="281" y="1293.6" width="14" height="14" fill="rgb(230,230,236)"/><rect x="281" y="1307.6" width="14" height="14" fill="rgb(202,202,208)"/><rect x="281" y="1321.6" width="14" height="14" fill="rgb(204,204,210)"/><rect x="281" y="1335.6" width="14" height="14" fill="rgb(241,241,247)"/><rect x="295" y="1293.6" width="14" height="14" fill="rgb(239,239,245)"/><rect x="295" y="1307.6" width="14" height="14" fill="rgb(187,187,193)"/><rect x="295" y="1321.6" width="14" height="14" fill="rgb(173,173,179)"/><rect x="309" y="1293.6" width="14" height="14" fill="rgb(234,234,240)"/><rect x="309" y="1307.6" width="14" height="14" fill="rgb(152,152,158)"/><rect x="309" y="1321.6" width="14" height="14" fill="rgb(175,175,181)"/><rect x="309" y="1335.6" width="14" height="14" fill="rgb(251,251,255)"/><rect x="323" y="1293.6" width="14" height="14" fill="rgb(241,241,247)"/><rect x="323" y="1307.6" width="14" height="14" fill="rgb(154,154,160)"/><rect x="323" y="1321.6" width="14" height="14" fill="rgb(185,185,191)"/><rect x="323" y="1335.6" width="14" height="14" fill="rgb(240,240,246)"/><rect x="337" y="1293.6" width="14" height="14" fill="rgb(245,245,251)"/><rect x="337" y="1307.6" width="14" height="14" fill="rgb(177,177,183)"/><rect x="337" y="1321.6" width="14" height="14" fill="rgb(173,173,179)"/><rect x="337" y="1335.6" width="14" height="14" fill="rgb(241,241,247)"/><rect x="351" y="1321.6" width="14" height="14" fill="rgb(248,248,254)"/><rect x="351" y="1335.6" width="14" height="14" fill="rgb(243,243,249)"/><rect x="365" y="1293.6" width="14" height="14" fill="rgb(229,229,235)"/><rect x="365" y="1307.6" width="14" height="14" fill="rgb(185,185,191)"/><rect x="365" y="1321.6" width="14" height="14" fill="rgb(224,224,230)"/><rect x="365" y="1335.6" width="14" height="14" fill="rgb(242,242,248)"/><rect x="379" y="1293.6" width="14" height="14" fill="rgb(237,237,243)"/><rect x="379" y="1307.6" width="14" height="14" fill="rgb(176,176,182)"/><rect x="379" y="1321.6" width="14" height="14" fill="rgb(179,179,185)"/><rect x="393" y="1293.6" width="14" height="14" fill="rgb(231,231,237)"/><rect x="393" y="1307.6" width="14" height="14" fill="rgb(186,186,192)"/><rect x="393" y="1321.6" width="14" height="14" fill="rgb(189,189,195)"/><rect x="407" y="1307.6" width="14" height="14" fill="rgb(193,193,199)"/><rect x="407" y="1321.6" width="14" height="14" fill="rgb(181,181,187)"/><rect x="407" y="1335.6" width="14" height="14" fill="rgb(241,241,247)"/><rect x="421" y="1293.6" width="14" height="14" fill="rgb(246,246,252)"/><rect x="421" y="1307.6" width="14" height="14" fill="rgb(186,186,192)"/><rect x="421" y="1321.6" width="14" height="14" fill="rgb(210,210,216)"/><rect x="421" y="1335.6" width="14" height="14" fill="rgb(244,244,250)"/><rect x="435" y="1293.6" width="14" height="14" fill="rgb(239,239,245)"/><rect x="435" y="1307.6" width="14" height="14" fill="rgb(156,156,162)"/><rect x="435" y="1321.6" width="14" height="14" fill="rgb(205,205,211)"/><rect x="435" y="1335.6" width="14" height="14" fill="rgb(240,240,246)"/><rect x="449" y="1293.6" width="14" height="14" fill="rgb(246,246,252)"/><rect x="449" y="1307.6" width="14" height="14" fill="rgb(153,153,159)"/><rect x="449" y="1321.6" width="14" height="14" fill="rgb(209,209,215)"/><rect x="449" y="1335.6" width="14" height="14" fill="rgb(244,244,250)"/><rect x="463" y="1293.6" width="14" height="14" fill="rgb(243,243,249)"/><rect x="463" y="1307.6" width="14" height="14" fill="rgb(193,193,199)"/><rect x="463" y="1321.6" width="14" height="14" fill="rgb(204,204,210)"/><rect x="463" y="1335.6" width="14" height="14" fill="rgb(251,251,255)"/><rect x="477" y="1307.6" width="14" height="14" fill="rgb(170,170,176)"/><rect x="477" y="1321.6" width="14" height="14" fill="rgb(199,199,205)"/><rect x="491" y="1293.6" width="14" height="14" fill="rgb(239,239,245)"/><rect x="491" y="1307.6" width="14" height="14" fill="rgb(169,169,175)"/><rect x="491" y="1321.6" width="14" height="14" fill="rgb(185,185,191)"/><rect x="491" y="1335.6" width="14" height="14" fill="rgb(243,243,249)"/><rect x="505" y="1293.6" width="14" height="14" fill="rgb(250,250,255)"/><rect x="505" y="1307.6" width="14" height="14" fill="rgb(199,199,205)"/><rect x="505" y="1321.6" width="14" height="14" fill="rgb(185,185,191)"/><rect x="505" y="1335.6" width="14" height="14" fill="rgb(240,240,246)"/><rect x="519" y="1293.6" width="14" height="14" fill="rgb(246,246,252)"/><rect x="519" y="1307.6" width="14" height="14" fill="rgb(169,169,175)"/><rect x="519" y="1321.6" width="14" height="14" fill="rgb(203,203,209)"/><rect x="533" y="1293.6" width="14" height="14" fill="rgb(238,238,244)"/><rect x="533" y="1307.6" width="14" height="14" fill="rgb(196,196,202)"/><rect x="533" y="1321.6" width="14" height="14" fill="rgb(198,198,204)"/><rect x="533" y="1335.6" width="14" height="14" fill="rgb(247,247,253)"/><rect x="547" y="1293.6" width="14" height="14" fill="rgb(247,247,253)"/><rect x="547" y="1307.6" width="14" height="14" fill="rgb(154,154,160)"/><rect x="547" y="1321.6" width="14" height="14" fill="rgb(177,177,183)"/><rect x="561" y="1293.6" width="14" height="14" fill="rgb(241,241,247)"/><rect x="561" y="1307.6" width="14" height="14" fill="rgb(160,160,166)"/><rect x="561" y="1321.6" width="14" height="14" fill="rgb(218,218,224)"/><rect x="561" y="1335.6" width="14" height="14" fill="rgb(248,248,254)"/><rect x="575" y="1293.6" width="14" height="14" fill="rgb(232,232,238)"/><rect x="575" y="1307.6" width="14" height="14" fill="rgb(181,181,187)"/><rect x="575" y="1321.6" width="14" height="14" fill="rgb(196,196,202)"/><rect x="575" y="1335.6" width="14" height="14" fill="rgb(239,239,245)"/><rect x="589" y="1293.6" width="14" height="14" fill="rgb(249,249,255)"/><rect x="589" y="1307.6" width="14" height="14" fill="rgb(154,154,160)"/><rect x="589" y="1321.6" width="14" height="14" fill="rgb(218,218,224)"/><rect x="603" y="1293.6" width="14" height="14" fill="rgb(246,246,252)"/><rect x="603" y="1307.6" width="14" height="14" fill="rgb(200,200,206)"/><rect x="603" y="1321.6" width="14" height="14" fill="rgb(222,222,228)"/><rect x="603" y="1335.6" width="14" height="14" fill="rgb(248,248,254)"/><rect x="617" y="1293.6" width="14" height="14" fill="rgb(238,238,244)"/><rect x="617" y="1307.6" width="14" height="14" fill="rgb(194,194,200)"/><rect x="617" y="1321.6" width="14" height="14" fill="rgb(192,192,198)"/><rect x="631" y="1293.6" width="1" height="14" fill="rgb(246,246,252)"/><rect x="631" y="1307.6" width="1" height="14" fill="rgb(201,201,207)"/><rect x="631" y="1321.6" width="1" height="14" fill="rgb(199,199,205)"/><rect x="631" y="1335.6" width="1" height="14" fill="rgb(240,240,246)"/><rect x="661" y="1307.6" width="14" height="14" fill="rgb(155,155,161)"/><rect x="661" y="1321.6" width="14" height="14" fill="rgb(187,187,193)"/><rect x="675" y="1293.6" width="14" height="14" fill="rgb(250,250,255)"/><rect x="675" y="1307.6" width="14" height="14" fill="rgb(192,192,198)"/><rect x="675" y="1321.6" width="14" height="14" fill="rgb(174,174,180)"/><rect x="675" y="1335.6" width="14" height="14" fill="rgb(239,239,245)"/><rect x="689" y="1293.6" width="14" height="14" fill="rgb(251,251,255)"/><rect x="689" y="1307.6" width="14" height="14" fill="rgb(194,194,200)"/><rect x="689" y="1321.6" width="14" height="14" fill="rgb(189,189,195)"/><rect x="703" y="1293.6" width="14" height="14" fill="rgb(237,237,243)"/><rect x="703" y="1307.6" width="14" height="14" fill="rgb(195,195,201)"/><rect x="703" y="1321.6" width="14" height="14" fill="rgb(194,194,200)"/><rect x="703" y="1335.6" width="14" height="14" fill="rgb(249,249,255)"/><rect x="717" y="1293.6" width="14" height="14" fill="rgb(228,228,234)"/><rect x="717" y="1307.6" width="14" height="14" fill="rgb(179,179,185)"/><rect x="717" y="1321.6" width="14" height="14" fill="rgb(192,192,198)"/><rect x="717" y="1335.6" width="14" height="14" fill="rgb(243,243,249)"/><rect x="731" y="1293.6" width="14" height="14" fill="rgb(247,247,253)"/><rect x="731" y="1307.6" width="14" height="14" fill="rgb(157,157,163)"/><rect x="731" y="1321.6" width="14" height="14" fill="rgb(201,201,207)"/><rect x="731" y="1335.6" width="14" height="14" fill="rgb(239,239,245)"/><rect x="745" y="1293.6" width="14" height="14" fill="rgb(234,234,240)"/><rect x="745" y="1307.6" width="14" height="14" fill="rgb(199,199,205)"/><rect x="745" y="1321.6" width="14" height="14" fill="rgb(188,188,194)"/><rect x="745" y="1335.6" width="14" height="14" fill="rgb(242,242,248)"/><rect x="759" y="1293.6" width="14" height="14" fill="rgb(251,251,255)"/><rect x="759" y="1307.6" width="14" height="14" fill="rgb(165,165,171)"/><rect x="759" y="1321.6" width="14" height="14" fill="rgb(195,195,201)"/><rect x="759" y="1335.6" width="14" height="14" fill="rgb(250,250,255)"/><rect x="773" y="1293.6" width="14" height="14" fill="rgb(243,243,249)"/><rect x="773" y="1307.6" width="14" height="14" fill="rgb(155,155,161)"/><rect x="773" y="1321.6" width="14" height="14" fill="rgb(180,180,186)"/><rect x="787" y="1293.6" width="14" height="14" fill="rgb(240,240,246)"/><rect x="787" y="1307.6" width="14" height="14" fill="rgb(185,185,191)"/><rect x="787" y="1321.6" width="14" height="14" fill="rgb(187,187,193)"/><rect x="787" y="1335.6" width="14" height="14" fill="rgb(242,242,248)"/><rect x="801" y="1307.6" width="14" height="14" fill="rgb(177,177,183)"/><rect x="801" y="1321.6" width="14" height="14" fill="rgb(225,225,231)"/><rect x="815" y="1293.6" width="14" height="14" fill="rgb(236,236,242)"/><rect x="815" y="1307.6" width="14" height="14" fill="rgb(195,195,201)"/><rect x="815" y="1321.6" width="14" height="14" fill="rgb(196,196,202)"/><rect x="815" y="1335.6" width="14" height="14" fill="rgb(249,249,255)"/><rect x="829" y="1293.6" width="14" height="14" fill="rgb(249,249,255)"/><rect x="829" y="1307.6" width="14" height="14" fill="rgb(174,174,180)"/><rect x="829" y="1321.6" width="14" height="14" fill="rgb(184,184,190)"/><rect x="829" y="1335.6" width="14" height="14" fill="rgb(242,242,248)"/><rect x="843" y="1293.6" width="14" height="14" fill="rgb(230,230,236)"/><rect x="843" y="1307.6" width="14" height="14" fill="rgb(161,161,167)"/><rect x="843" y="1321.6" width="14" height="14" fill="rgb(179,179,185)"/><rect x="843" y="1335.6" width="14" height="14" fill="rgb(245,245,251)"/><rect x="857" y="1293.6" width="14" height="14" fill="rgb(249,249,255)"/><rect x="857" y="1307.6" width="14" height="14" fill="rgb(164,164,170)"/><rect x="857" y="1321.6" width="14" height="14" fill="rgb(170,170,176)"/><rect x="871" y="1307.6" width="14" height="14" fill="rgb(187,187,193)"/><rect x="871" y="1321.6" width="14" height="14" fill="rgb(181,181,187)"/><rect x="871" y="1335.6" width="14" height="14" fill="rgb(246,246,252)"/><rect x="885" y="1293.6" width="14" height="14" fill="rgb(237,237,243)"/><rect x="885" y="1307.6" width="14" height="14" fill="rgb(150,150,156)"/><rect x="885" y="1321.6" width="14" height="14" fill="rgb(179,179,185)"/><rect x="885" y="1335.6" width="14" height="14" fill="rgb(251,251,255)"/><rect x="899" y="1293.6" width="14" height="14" fill="rgb(245,245,251)"/><rect x="899" y="1307.6" width="14" height="14" fill="rgb(173,173,179)"/><rect x="899" y="1321.6" width="14" height="14" fill="rgb(209,209,215)"/><rect x="899" y="1335.6" width="14" height="14" fill="rgb(248,248,254)"/><rect x="913" y="1293.6" width="14" height="14" fill="rgb(232,232,238)"/><rect x="913" y="1307.6" width="14" height="14" fill="rgb(194,194,200)"/><rect x="913" y="1321.6" width="14" height="14" fill="rgb(224,224,230)"/><rect x="927" y="1293.6" width="14" height="14" fill="rgb(247,247,253)"/><rect x="927" y="1307.6" width="14" height="14" fill="rgb(191,191,197)"/><rect x="927" y="1321.6" width="14" height="14" fill="rgb(213,213,219)"/><rect x="927" y="1335.6" width="14" height="14" fill="rgb(239,239,245)"/><rect x="941" y="1293.6" width="14" height="14" fill="rgb(242,242,248)"/><rect x="941" y="1307.6" width="14" height="14" fill="rgb(205,205,211)"/><rect x="941" y="1321.6" width="14" height="14" fill="rgb(219,219,225)"/><rect x="955" y="1293.6" width="14" height="14" fill="rgb(240,240,246)"/><rect x="955" y="1307.6" width="14" height="14" fill="rgb(175,175,181)"/><rect x="955" y="1321.6" width="14" height="14" fill="rgb(195,195,201)"/><rect x="955" y="1335.6" width="14" height="14" fill="rgb(250,250,255)"/><rect x="969" y="1293.6" width="14" height="14" fill="rgb(231,231,237)"/><rect x="969" y="1307.6" width="14" height="14" fill="rgb(180,180,186)"/><rect x="969" y="1321.6" width="14" height="14" fill="rgb(210,210,216)"/><rect x="969" y="1335.6" width="14" height="14" fill="rgb(250,250,255)"/><rect x="983" y="1293.6" width="14" height="14" fill="rgb(229,229,235)"/><rect x="983" y="1307.6" width="14" height="14" fill="rgb(162,162,168)"/><rect x="983" y="1321.6" width="14" height="14" fill="rgb(174,174,180)"/><rect x="983" y="1335.6" width="14" height="14" fill="rgb(244,244,250)"/><rect x="997" y="1293.6" width="14" height="14" fill="rgb(242,242,248)"/><rect x="997" y="1307.6" width="14" height="14" fill="rgb(160,160,166)"/><rect x="997" y="1321.6" width="14" height="14" fill="rgb(177,177,183)"/><rect x="997" y="1335.6" width="14" height="14" fill="rgb(248,248,254)"/><rect x="1011" y="1293.6" width="14" height="14" fill="rgb(247,247,253)"/><rect x="1011" y="1307.6" width="14" height="14" fill="rgb(153,153,159)"/><rect x="1011" y="1321.6" width="14" height="14" fill="rgb(176,176,182)"/><rect x="1011" y="1335.6" width="14" height="14" fill="rgb(238,238,244)"/><rect x="1025" y="1293.6" width="14" height="14" fill="rgb(246,246,252)"/><rect x="1025" y="1307.6" width="14" height="14" fill="rgb(159,159,165)"/><rect x="1025" y="1321.6" width="14" height="14" fill="rgb(204,204,210)"/><rect x="1025" y="1335.6" width="14" height="14" fill="rgb(241,241,247)"/><rect x="1039" y="1293.6" width="3" height="14" fill="rgb(239,239,245)"/><rect x="1039" y="1307.6" width="3" height="14" fill="rgb(189,189,195)"/><rect x="1039" y="1321.6" width="3" height="14" fill="rgb(171,171,177)"/><rect x="1039" y="1335.6" width="3" height="14" fill="rgb(240,240,246)"/><rect x="267" y="1389.6" width="14" height="14" fill="rgb(234,234,240)"/><rect x="267" y="1403.6" width="14" height="14" fill="rgb(189,189,195)"/><rect x="267" y="1417.6" width="14" height="14" fill="rgb(194,194,200)"/><rect x="267" y="1431.6" width="14" height="14" fill="rgb(242,242,248)"/><rect x="281" y="1389.6" width="14" height="14" fill="rgb(248,248,254)"/><rect x="281" y="1403.6" width="14" height="14" fill="rgb(166,166,172)"/><rect x="281" y="1417.6" width="14" height="14" fill="rgb(192,192,198)"/><rect x="281" y="1431.6" width="14" height="14" fill="rgb(249,249,255)"/><rect x="295" y="1389.6" width="14" height="14" fill="rgb(243,243,249)"/><rect x="295" y="1403.6" width="14" height="14" fill="rgb(157,157,163)"/><rect x="295" y="1417.6" width="14" height="14" fill="rgb(177,177,183)"/><rect x="309" y="1389.6" width="14" height="14" fill="rgb(242,242,248)"/><rect x="309" y="1403.6" width="14" height="14" fill="rgb(180,180,186)"/><rect x="309" y="1417.6" width="14" height="14" fill="rgb(200,200,206)"/><rect x="309" y="1431.6" width="14" height="14" fill="rgb(247,247,253)"/><rect x="323" y="1389.6" width="14" height="14" fill="rgb(240,240,246)"/><rect x="323" y="1403.6" width="14" height="14" fill="rgb(246,246,252)"/><rect x="323" y="1417.6" width="14" height="14" fill="rgb(244,244,250)"/><rect x="323" y="1431.6" width="14" height="14" fill="rgb(241,241,247)"/><rect x="337" y="1389.6" width="14" height="14" fill="rgb(244,244,250)"/><rect x="337" y="1403.6" width="14" height="14" fill="rgb(151,151,157)"/><rect x="337" y="1417.6" width="14" height="14" fill="rgb(183,183,189)"/><rect x="351" y="1389.6" width="14" height="14" fill="rgb(239,239,245)"/><rect x="351" y="1403.6" width="14" height="14" fill="rgb(159,159,165)"/><rect x="351" y="1417.6" width="14" height="14" fill="rgb(214,214,220)"/><rect x="365" y="1389.6" width="14" height="14" fill="rgb(228,228,234)"/><rect x="365" y="1403.6" width="14" height="14" fill="rgb(198,198,204)"/><rect x="365" y="1417.6" width="14" height="14" fill="rgb(203,203,209)"/><rect x="365" y="1431.6" width="14" height="14" fill="rgb(247,247,253)"/><rect x="379" y="1389.6" width="14" height="14" fill="rgb(248,248,254)"/><rect x="379" y="1403.6" width="14" height="14" fill="rgb(205,205,211)"/><rect x="379" y="1417.6" width="14" height="14" fill="rgb(175,175,181)"/><rect x="379" y="1431.6" width="14" height="14" fill="rgb(246,246,252)"/><rect x="393" y="1389.6" width="14" height="14" fill="rgb(244,244,250)"/><rect x="393" y="1403.6" width="14" height="14" fill="rgb(173,173,179)"/><rect x="393" y="1417.6" width="14" height="14" fill="rgb(180,180,186)"/><rect x="393" y="1431.6" width="14" height="14" fill="rgb(249,249,255)"/><rect x="407" y="1403.6" width="14" height="14" fill="rgb(164,164,170)"/><rect x="407" y="1417.6" width="14" height="14" fill="rgb(204,204,210)"/><rect x="421" y="1403.6" width="14" height="14" fill="rgb(182,182,188)"/><rect x="421" y="1417.6" width="14" height="14" fill="rgb(191,191,197)"/><rect x="421" y="1431.6" width="14" height="14" fill="rgb(245,245,251)"/><rect x="435" y="1389.6" width="14" height="14" fill="rgb(247,247,253)"/><rect x="435" y="1403.6" width="14" height="14" fill="rgb(201,201,207)"/><rect x="435" y="1417.6" width="14" height="14" fill="rgb(220,220,226)"/><rect x="435" y="1431.6" width="14" height="14" fill="rgb(244,244,250)"/><rect x="449" y="1389.6" width="14" height="14" fill="rgb(243,243,249)"/><rect x="449" y="1403.6" width="14" height="14" fill="rgb(248,248,254)"/><rect x="449" y="1417.6" width="14" height="14" fill="rgb(243,243,249)"/><rect x="463" y="1389.6" width="14" height="14" fill="rgb(243,243,249)"/><rect x="463" y="1403.6" width="14" height="14" fill="rgb(172,172,178)"/><rect x="463" y="1417.6" width="14" height="14" fill="rgb(216,216,222)"/><rect x="463" y="1431.6" width="14" height="14" fill="rgb(238,238,244)"/><rect x="477" y="1389.6" width="14" height="14" fill="rgb(228,228,234)"/><rect x="477" y="1403.6" width="14" height="14" fill="rgb(200,200,206)"/><rect x="477" y="1417.6" width="14" height="14" fill="rgb(187,187,193)"/><rect x="491" y="1389.6" width="14" height="14" fill="rgb(236,236,242)"/><rect x="491" y="1403.6" width="14" height="14" fill="rgb(162,162,168)"/><rect x="491" y="1417.6" width="14" height="14" fill="rgb(214,214,220)"/><rect x="491" y="1431.6" width="14" height="14" fill="rgb(249,249,255)"/><rect x="505" y="1389.6" width="14" height="14" fill="rgb(242,242,248)"/><rect x="505" y="1403.6" width="14" height="14" fill="rgb(201,201,207)"/><rect x="505" y="1417.6" width="14" height="14" fill="rgb(216,216,222)"/><rect x="505" y="1431.6" width="14" height="14" fill="rgb(249,249,255)"/><rect x="519" y="1389.6" width="14" height="14" fill="rgb(239,239,245)"/><rect x="519" y="1403.6" width="14" height="14" fill="rgb(155,155,161)"/><rect x="519" y="1417.6" width="14" height="14" fill="rgb(184,184,190)"/><rect x="519" y="1431.6" width="14" height="14" fill="rgb(241,241,247)"/><rect x="533" y="1389.6" width="1" height="14" fill="rgb(235,235,241)"/><rect x="533" y="1403.6" width="1" height="14" fill="rgb(180,180,186)"/><rect x="533" y="1417.6" width="1" height="14" fill="rgb(182,182,188)"/><rect x="533" y="1431.6" width="1" height="14" fill="rgb(248,248,254)"/><rect x="661" y="1389.6" width="14" height="14" fill="rgb(234,234,240)"/><rect x="661" y="1403.6" width="14" height="14" fill="rgb(180,180,186)"/><rect x="661" y="1417.6" width="14" height="14" fill="rgb(209,209,215)"/><rect x="661" y="1431.6" width="14" height="14" fill="rgb(238,238,244)"/><rect x="675" y="1389.6" width="14" height="14" fill="rgb(243,243,249)"/><rect x="675" y="1403.6" width="14" height="14" fill="rgb(191,191,197)"/><rect x="675" y="1417.6" width="14" height="14" fill="rgb(192,192,198)"/><rect x="675" y="1431.6" width="14" height="14" fill="rgb(240,240,246)"/><rect x="689" y="1403.6" width="14" height="14" fill="rgb(192,192,198)"/><rect x="689" y="1417.6" width="14" height="14" fill="rgb(177,177,183)"/><rect x="689" y="1431.6" width="14" height="14" fill="rgb(250,250,255)"/><rect x="703" y="1403.6" width="14" height="14" fill="rgb(195,195,201)"/><rect x="703" y="1417.6" width="14" height="14" fill="rgb(218,218,224)"/><rect x="703" y="1431.6" width="14" height="14" fill="rgb(244,244,250)"/><rect x="717" y="1389.6" width="14" height="14" fill="rgb(243,243,249)"/><rect x="717" y="1403.6" width="14" height="14" fill="rgb(161,161,167)"/><rect x="717" y="1417.6" width="14" height="14" fill="rgb(197,197,203)"/><rect x="717" y="1431.6" width="14" height="14" fill="rgb(248,248,254)"/><rect x="731" y="1389.6" width="14" height="14" fill="rgb(230,230,236)"/><rect x="731" y="1403.6" width="14" height="14" fill="rgb(201,201,207)"/><rect x="731" y="1417.6" width="14" height="14" fill="rgb(216,216,222)"/><rect x="731" y="1431.6" width="14" height="14" fill="rgb(250,250,255)"/><rect x="745" y="1389.6" width="14" height="14" fill="rgb(242,242,248)"/><rect x="745" y="1403.6" width="14" height="14" fill="rgb(175,175,181)"/><rect x="745" y="1417.6" width="14" height="14" fill="rgb(217,217,223)"/><rect x="745" y="1431.6" width="14" height="14" fill="rgb(240,240,246)"/><rect x="759" y="1389.6" width="14" height="14" fill="rgb(251,251,255)"/><rect x="759" y="1403.6" width="14" height="14" fill="rgb(160,160,166)"/><rect x="759" y="1417.6" width="14" height="14" fill="rgb(180,180,186)"/><rect x="759" y="1431.6" width="14" height="14" fill="rgb(242,242,248)"/><rect x="773" y="1389.6" width="14" height="14" fill="rgb(228,228,234)"/><rect x="773" y="1403.6" width="14" height="14" fill="rgb(159,159,165)"/><rect x="773" y="1417.6" width="14" height="14" fill="rgb(207,207,213)"/><rect x="787" y="1403.6" width="14" height="14" fill="rgb(191,191,197)"/><rect x="787" y="1417.6" width="14" height="14" fill="rgb(179,179,185)"/><rect x="801" y="1389.6" width="14" height="14" fill="rgb(249,249,255)"/><rect x="801" y="1403.6" width="14" height="14" fill="rgb(172,172,178)"/><rect x="801" y="1417.6" width="14" height="14" fill="rgb(179,179,185)"/><rect x="815" y="1389.6" width="14" height="14" fill="rgb(245,245,251)"/><rect x="815" y="1403.6" width="14" height="14" fill="rgb(158,158,164)"/><rect x="815" y="1417.6" width="14" height="14" fill="rgb(171,171,177)"/><rect x="815" y="1431.6" width="14" height="14" fill="rgb(238,238,244)"/><rect x="829" y="1403.6" width="14" height="14" fill="rgb(196,196,202)"/><rect x="829" y="1417.6" width="14" height="14" fill="rgb(211,211,217)"/><rect x="829" y="1431.6" width="14" height="14" fill="rgb(241,241,247)"/><rect x="843" y="1389.6" width="14" height="14" fill="rgb(244,244,250)"/><rect x="843" y="1403.6" width="14" height="14" fill="rgb(197,197,203)"/><rect x="843" y="1417.6" width="14" height="14" fill="rgb(178,178,184)"/><rect x="843" y="1431.6" width="14" height="14" fill="rgb(251,251,255)"/><rect x="857" y="1389.6" width="14" height="14" fill="rgb(234,234,240)"/><rect x="857" y="1403.6" width="14" height="14" fill="rgb(202,202,208)"/><rect x="857" y="1417.6" width="14" height="14" fill="rgb(225,225,231)"/><rect x="857" y="1431.6" width="14" height="14" fill="rgb(244,244,250)"/><rect x="871" y="1389.6" width="14" height="14" fill="rgb(228,228,234)"/><rect x="871" y="1403.6" width="14" height="14" fill="rgb(166,166,172)"/><rect x="871" y="1417.6" width="14" height="14" fill="rgb(183,183,189)"/><rect x="871" y="1431.6" width="14" height="14" fill="rgb(247,247,253)"/><rect x="885" y="1389.6" width="14" height="14" fill="rgb(244,244,250)"/><rect x="885" y="1403.6" width="14" height="14" fill="rgb(165,165,171)"/><rect x="885" y="1417.6" width="14" height="14" fill="rgb(218,218,224)"/><rect x="885" y="1431.6" width="14" height="14" fill="rgb(248,248,254)"/><rect x="899" y="1389.6" width="14" height="14" fill="rgb(236,236,242)"/><rect x="899" y="1403.6" width="14" height="14" fill="rgb(184,184,190)"/><rect x="899" y="1417.6" width="14" height="14" fill="rgb(196,196,202)"/><rect x="899" y="1431.6" width="14" height="14" fill="rgb(242,242,248)"/><rect x="913" y="1389.6" width="14" height="14" fill="rgb(229,229,235)"/><rect x="913" y="1403.6" width="14" height="14" fill="rgb(197,197,203)"/><rect x="913" y="1417.6" width="14" height="14" fill="rgb(192,192,198)"/><rect x="927" y="1389.6" width="14" height="14" fill="rgb(249,249,255)"/><rect x="927" y="1403.6" width="14" height="14" fill="rgb(187,187,193)"/><rect x="927" y="1417.6" width="14" height="14" fill="rgb(222,222,228)"/><rect x="941" y="1389.6" width="14" height="14" fill="rgb(241,241,247)"/><rect x="941" y="1403.6" width="14" height="14" fill="rgb(202,202,208)"/><rect x="941" y="1417.6" width="14" height="14" fill="rgb(202,202,208)"/><rect x="941" y="1431.6" width="14" height="14" fill="rgb(242,242,248)"/><rect x="955" y="1389.6" width="14" height="14" fill="rgb(245,245,251)"/><rect x="955" y="1403.6" width="14" height="14" fill="rgb(159,159,165)"/><rect x="955" y="1417.6" width="14" height="14" fill="rgb(203,203,209)"/><rect x="969" y="1389.6" width="14" height="14" fill="rgb(228,228,234)"/><rect x="969" y="1403.6" width="14" height="14" fill="rgb(205,205,211)"/><rect x="969" y="1417.6" width="14" height="14" fill="rgb(198,198,204)"/><rect x="969" y="1431.6" width="14" height="14" fill="rgb(243,243,249)"/><rect x="983" y="1389.6" width="14" height="14" fill="rgb(247,247,253)"/><rect x="983" y="1403.6" width="14" height="14" fill="rgb(150,150,156)"/><rect x="983" y="1417.6" width="14" height="14" fill="rgb(219,219,225)"/><rect x="983" y="1431.6" width="14" height="14" fill="rgb(242,242,248)"/><rect x="997" y="1389.6" width="14" height="14" fill="rgb(233,233,239)"/><rect x="997" y="1403.6" width="14" height="14" fill="rgb(159,159,165)"/><rect x="997" y="1417.6" width="14" height="14" fill="rgb(200,200,206)"/><rect x="997" y="1431.6" width="14" height="14" fill="rgb(241,241,247)"/><rect x="1011" y="1389.6" width="14" height="14" fill="rgb(245,245,251)"/><rect x="1011" y="1403.6" width="14" height="14" fill="rgb(153,153,159)"/><rect x="1011" y="1417.6" width="14" height="14" fill="rgb(190,190,196)"/><rect x="1025" y="1389.6" width="14" height="14" fill="rgb(244,244,250)"/><rect x="1025" y="1403.6" width="14" height="14" fill="rgb(185,185,191)"/><rect x="1025" y="1417.6" width="14" height="14" fill="rgb(200,200,206)"/><rect x="1025" y="1431.6" width="14" height="14" fill="rgb(241,241,247)"/><rect x="1039" y="1389.6" width="7" height="14" fill="rgb(245,245,251)"/><rect x="1039" y="1403.6" width="7" height="14" fill="rgb(153,153,159)"/><rect x="1039" y="1417.6" width="7" height="14" fill="rgb(185,185,191)"/><rect x="1039" y="1431.6" width="7" height="14" fill="rgb(244,244,250)"/><rect x="264" y="1485.6" width="14" height="14" fill="rgb(236,236,242)"/><rect x="264" y="1499.6" width="14" height="14" fill="rgb(152,152,158)"/><rect x="264" y="1513.6" width="14" height="14" fill="rgb(219,219,225)"/><rect x="264" y="1527.6" width="14" height="14" fill="rgb(241,241,247)"/><rect x="278" y="1485.6" width="14" height="14" fill="rgb(244,244,250)"/><rect x="278" y="1499.6" width="14" height="14" fill="rgb(178,178,184)"/><rect x="278" y="1513.6" width="14" height="14" fill="rgb(205,205,211)"/><rect x="278" y="1527.6" width="14" height="14" fill="rgb(238,238,244)"/><rect x="292" y="1499.6" width="14" height="14" fill="rgb(154,154,160)"/><rect x="292" y="1513.6" width="14" height="14" fill="rgb(198,198,204)"/><rect x="292" y="1527.6" width="14" height="14" fill="rgb(248,248,254)"/><rect x="306" y="1485.6" width="14" height="14" fill="rgb(247,247,253)"/><rect x="306" y="1499.6" width="14" height="14" fill="rgb(182,182,188)"/><rect x="306" y="1513.6" width="14" height="14" fill="rgb(208,208,214)"/><rect x="320" y="1485.6" width="14" height="14" fill="rgb(234,234,240)"/><rect x="320" y="1499.6" width="14" height="14" fill="rgb(194,194,200)"/><rect x="320" y="1513.6" width="14" height="14" fill="rgb(187,187,193)"/><rect x="334" y="1485.6" width="14" height="14" fill="rgb(244,244,250)"/><rect x="334" y="1499.6" width="14" height="14" fill="rgb(184,184,190)"/><rect x="334" y="1513.6" width="14" height="14" fill="rgb(221,221,227)"/><rect x="348" y="1485.6" width="14" height="14" fill="rgb(244,244,250)"/><rect x="348" y="1499.6" width="14" height="14" fill="rgb(165,165,171)"/><rect x="348" y="1513.6" width="14" height="14" fill="rgb(214,214,220)"/><rect x="362" y="1499.6" width="14" height="14" fill="rgb(250,250,255)"/><rect x="362" y="1513.6" width="14" height="14" fill="rgb(249,249,255)"/><rect x="362" y="1527.6" width="14" height="14" fill="rgb(248,248,254)"/><rect x="376" y="1485.6" width="14" height="14" fill="rgb(242,242,248)"/><rect x="376" y="1499.6" width="14" height="14" fill="rgb(170,170,176)"/><rect x="376" y="1513.6" width="14" height="14" fill="rgb(174,174,180)"/><rect x="376" y="1527.6" width="14" height="14" fill="rgb(245,245,251)"/><rect x="390" y="1485.6" width="14" height="14" fill="rgb(241,241,247)"/><rect x="390" y="1499.6" width="14" height="14" fill="rgb(154,154,160)"/><rect x="390" y="1513.6" width="14" height="14" fill="rgb(183,183,189)"/><rect x="390" y="1527.6" width="14" height="14" fill="rgb(247,247,253)"/><rect x="404" y="1499.6" width="14" height="14" fill="rgb(157,157,163)"/><rect x="404" y="1513.6" width="14" height="14" fill="rgb(219,219,225)"/><rect x="404" y="1527.6" width="14" height="14" fill="rgb(242,242,248)"/><rect x="418" y="1485.6" width="14" height="14" fill="rgb(250,250,255)"/><rect x="418" y="1499.6" width="14" height="14" fill="rgb(191,191,197)"/><rect x="418" y="1513.6" width="14" height="14" fill="rgb(212,212,218)"/><rect x="418" y="1527.6" width="14" height="14" fill="rgb(249,249,255)"/><rect x="432" y="1485.6" width="14" height="14" fill="rgb(232,232,238)"/><rect x="432" y="1499.6" width="14" height="14" fill="rgb(166,166,172)"/><rect x="432" y="1513.6" width="14" height="14" fill="rgb(178,178,184)"/><rect x="446" y="1485.6" width="14" height="14" fill="rgb(235,235,241)"/><rect x="446" y="1499.6" width="14" height="14" fill="rgb(197,197,203)"/><rect x="446" y="1513.6" width="14" height="14" fill="rgb(176,176,182)"/><rect x="446" y="1527.6" width="14" height="14" fill="rgb(250,250,255)"/><rect x="460" y="1485.6" width="14" height="14" fill="rgb(243,243,249)"/><rect x="460" y="1499.6" width="14" height="14" fill="rgb(160,160,166)"/><rect x="460" y="1513.6" width="14" height="14" fill="rgb(212,212,218)"/><rect x="460" y="1527.6" width="14" height="14" fill="rgb(245,245,251)"/><rect x="474" y="1485.6" width="6" height="14" fill="rgb(233,233,239)"/><rect x="474" y="1499.6" width="6" height="14" fill="rgb(195,195,201)"/><rect x="474" y="1513.6" width="6" height="14" fill="rgb(197,197,203)"/><rect x="660" y="1485.6" width="14" height="14" fill="rgb(240,240,246)"/><rect x="660" y="1499.6" width="14" height="14" fill="rgb(171,171,177)"/><rect x="660" y="1513.6" width="14" height="14" fill="rgb(196,196,202)"/><rect x="660" y="1527.6" width="14" height="14" fill="rgb(244,244,250)"/><rect x="674" y="1485.6" width="14" height="14" fill="rgb(239,239,245)"/><rect x="674" y="1499.6" width="14" height="14" fill="rgb(170,170,176)"/><rect x="674" y="1513.6" width="14" height="14" fill="rgb(175,175,181)"/><rect x="674" y="1527.6" width="14" height="14" fill="rgb(249,249,255)"/><rect x="688" y="1485.6" width="14" height="14" fill="rgb(228,228,234)"/><rect x="688" y="1499.6" width="14" height="14" fill="rgb(171,171,177)"/><rect x="688" y="1513.6" width="14" height="14" fill="rgb(205,205,211)"/><rect x="702" y="1485.6" width="14" height="14" fill="rgb(242,242,248)"/><rect x="702" y="1499.6" width="14" height="14" fill="rgb(195,195,201)"/><rect x="702" y="1513.6" width="14" height="14" fill="rgb(171,171,177)"/><rect x="702" y="1527.6" width="14" height="14" fill="rgb(250,250,255)"/><rect x="716" y="1485.6" width="14" height="14" fill="rgb(238,238,244)"/><rect x="716" y="1499.6" width="14" height="14" fill="rgb(183,183,189)"/><rect x="716" y="1513.6" width="14" height="14" fill="rgb(209,209,215)"/><rect x="716" y="1527.6" width="14" height="14" fill="rgb(247,247,253)"/><rect x="730" y="1485.6" width="14" height="14" fill="rgb(244,244,250)"/><rect x="730" y="1499.6" width="14" height="14" fill="rgb(154,154,160)"/><rect x="730" y="1513.6" width="14" height="14" fill="rgb(177,177,183)"/><rect x="730" y="1527.6" width="14" height="14" fill="rgb(245,245,251)"/><rect x="744" y="1485.6" width="14" height="14" fill="rgb(231,231,237)"/><rect x="744" y="1499.6" width="14" height="14" fill="rgb(155,155,161)"/><rect x="744" y="1513.6" width="14" height="14" fill="rgb(186,186,192)"/><rect x="744" y="1527.6" width="14" height="14" fill="rgb(246,246,252)"/><rect x="758" y="1485.6" width="14" height="14" fill="rgb(229,229,235)"/><rect x="758" y="1499.6" width="14" height="14" fill="rgb(199,199,205)"/><rect x="758" y="1513.6" width="14" height="14" fill="rgb(181,181,187)"/><rect x="758" y="1527.6" width="14" height="14" fill="rgb(246,246,252)"/><rect x="772" y="1499.6" width="14" height="14" fill="rgb(158,158,164)"/><rect x="772" y="1513.6" width="14" height="14" fill="rgb(222,222,228)"/><rect x="772" y="1527.6" width="14" height="14" fill="rgb(251,251,255)"/><rect x="786" y="1485.6" width="14" height="14" fill="rgb(249,249,255)"/><rect x="786" y="1499.6" width="14" height="14" fill="rgb(202,202,208)"/><rect x="786" y="1513.6" width="14" height="14" fill="rgb(186,186,192)"/><rect x="786" y="1527.6" width="14" height="14" fill="rgb(250,250,255)"/><rect x="800" y="1485.6" width="14" height="14" fill="rgb(232,232,238)"/><rect x="800" y="1499.6" width="14" height="14" fill="rgb(184,184,190)"/><rect x="800" y="1513.6" width="14" height="14" fill="rgb(202,202,208)"/><rect x="814" y="1485.6" width="14" height="14" fill="rgb(250,250,255)"/><rect x="814" y="1499.6" width="14" height="14" fill="rgb(170,170,176)"/><rect x="814" y="1513.6" width="14" height="14" fill="rgb(175,175,181)"/><rect x="814" y="1527.6" width="14" height="14" fill="rgb(246,246,252)"/><rect x="828" y="1485.6" width="14" height="14" fill="rgb(229,229,235)"/><rect x="828" y="1499.6" width="14" height="14" fill="rgb(201,201,207)"/><rect x="828" y="1513.6" width="14" height="14" fill="rgb(214,214,220)"/><rect x="828" y="1527.6" width="14" height="14" fill="rgb(243,243,249)"/><rect x="842" y="1485.6" width="14" height="14" fill="rgb(241,241,247)"/><rect x="842" y="1499.6" width="14" height="14" fill="rgb(154,154,160)"/><rect x="842" y="1513.6" width="14" height="14" fill="rgb(187,187,193)"/><rect x="842" y="1527.6" width="14" height="14" fill="rgb(238,238,244)"/><rect x="856" y="1485.6" width="14" height="14" fill="rgb(248,248,254)"/><rect x="856" y="1499.6" width="14" height="14" fill="rgb(155,155,161)"/><rect x="856" y="1513.6" width="14" height="14" fill="rgb(221,221,227)"/><rect x="856" y="1527.6" width="14" height="14" fill="rgb(246,246,252)"/><rect x="870" y="1485.6" width="14" height="14" fill="rgb(230,230,236)"/><rect x="870" y="1499.6" width="14" height="14" fill="rgb(188,188,194)"/><rect x="870" y="1513.6" width="14" height="14" fill="rgb(224,224,230)"/><rect x="870" y="1527.6" width="14" height="14" fill="rgb(245,245,251)"/><rect x="884" y="1485.6" width="14" height="14" fill="rgb(230,230,236)"/><rect x="884" y="1499.6" width="14" height="14" fill="rgb(166,166,172)"/><rect x="884" y="1513.6" width="14" height="14" fill="rgb(225,225,231)"/><rect x="884" y="1527.6" width="14" height="14" fill="rgb(241,241,247)"/><rect x="898" y="1485.6" width="14" height="14" fill="rgb(242,242,248)"/><rect x="898" y="1499.6" width="14" height="14" fill="rgb(150,150,156)"/><rect x="898" y="1513.6" width="14" height="14" fill="rgb(191,191,197)"/><rect x="912" y="1485.6" width="14" height="14" fill="rgb(241,241,247)"/><rect x="912" y="1499.6" width="14" height="14" fill="rgb(167,167,173)"/><rect x="912" y="1513.6" width="14" height="14" fill="rgb(209,209,215)"/><rect x="912" y="1527.6" width="14" height="14" fill="rgb(242,242,248)"/><rect x="926" y="1485.6" width="14" height="14" fill="rgb(229,229,235)"/><rect x="926" y="1499.6" width="14" height="14" fill="rgb(183,183,189)"/><rect x="926" y="1513.6" width="14" height="14" fill="rgb(215,215,221)"/><rect x="926" y="1527.6" width="14" height="14" fill="rgb(245,245,251)"/><rect x="940" y="1485.6" width="14" height="14" fill="rgb(231,231,237)"/><rect x="940" y="1499.6" width="14" height="14" fill="rgb(160,160,166)"/><rect x="940" y="1513.6" width="14" height="14" fill="rgb(186,186,192)"/><rect x="940" y="1527.6" width="14" height="14" fill="rgb(239,239,245)"/><rect x="954" y="1485.6" width="14" height="14" fill="rgb(233,233,239)"/><rect x="954" y="1499.6" width="14" height="14" fill="rgb(162,162,168)"/><rect x="954" y="1513.6" width="14" height="14" fill="rgb(189,189,195)"/><rect x="954" y="1527.6" width="14" height="14" fill="rgb(247,247,253)"/><rect x="968" y="1485.6" width="14" height="14" fill="rgb(244,244,250)"/><rect x="968" y="1499.6" width="14" height="14" fill="rgb(198,198,204)"/><rect x="968" y="1513.6" width="14" height="14" fill="rgb(183,183,189)"/><rect x="968" y="1527.6" width="14" height="14" fill="rgb(247,247,253)"/><rect x="982" y="1485.6" width="14" height="14" fill="rgb(242,242,248)"/><rect x="982" y="1499.6" width="14" height="14" fill="rgb(182,182,188)"/><rect x="982" y="1513.6" width="14" height="14" fill="rgb(213,213,219)"/><rect x="982" y="1527.6" width="14" height="14" fill="rgb(243,243,249)"/><rect x="996" y="1485.6" width="14" height="14" fill="rgb(236,236,242)"/><rect x="996" y="1499.6" width="14" height="14" fill="rgb(172,172,178)"/><rect x="996" y="1513.6" width="14" height="14" fill="rgb(221,221,227)"/><rect x="996" y="1527.6" width="14" height="14" fill="rgb(238,238,244)"/><rect x="1010" y="1485.6" width="14" height="14" fill="rgb(236,236,242)"/><rect x="1010" y="1499.6" width="14" height="14" fill="rgb(152,152,158)"/><rect x="1010" y="1513.6" width="14" height="14" fill="rgb(170,170,176)"/><rect x="1010" y="1527.6" width="14" height="14" fill="rgb(238,238,244)"/><rect x="1024" y="1485.6" width="14" height="14" fill="rgb(251,251,255)"/><rect x="1024" y="1499.6" width="14" height="14" fill="rgb(182,182,188)"/><rect x="1024" y="1513.6" width="14" height="14" fill="rgb(205,205,211)"/><rect x="1024" y="1527.6" width="14" height="14" fill="rgb(244,244,250)"/><rect x="1038" y="1485.6" width="8" height="14" fill="rgb(244,244,250)"/><rect x="1038" y="1499.6" width="8" height="14" fill="rgb(180,180,186)"/><rect x="1038" y="1513.6" width="8" height="14" fill="rgb(185,185,191)"/><rect x="267" y="1581.6" width="14" height="14" fill="rgb(231,231,237)"/><rect x="267" y="1595.6" width="14" height="14" fill="rgb(192,192,198)"/><rect x="267" y="1609.6" width="14" height="14" fill="rgb(222,222,228)"/><rect x="267" y="1623.6" width="14" height="14" fill="rgb(251,251,255)"/><rect x="281" y="1581.6" width="14" height="14" fill="rgb(249,249,255)"/><rect x="281" y="1595.6" width="14" height="14" fill="rgb(181,181,187)"/><rect x="281" y="1609.6" width="14" height="14" fill="rgb(204,204,210)"/><rect x="281" y="1623.6" width="14" height="14" fill="rgb(250,250,255)"/><rect x="295" y="1581.6" width="14" height="14" fill="rgb(244,244,250)"/><rect x="295" y="1595.6" width="14" height="14" fill="rgb(169,169,175)"/><rect x="295" y="1609.6" width="14" height="14" fill="rgb(214,214,220)"/><rect x="295" y="1623.6" width="14" height="14" fill="rgb(244,244,250)"/><rect x="309" y="1581.6" width="14" height="14" fill="rgb(235,235,241)"/><rect x="309" y="1595.6" width="14" height="14" fill="rgb(171,171,177)"/><rect x="309" y="1609.6" width="14" height="14" fill="rgb(182,182,188)"/><rect x="309" y="1623.6" width="14" height="14" fill="rgb(242,242,248)"/><rect x="323" y="1581.6" width="14" height="14" fill="rgb(240,240,246)"/><rect x="323" y="1595.6" width="14" height="14" fill="rgb(172,172,178)"/><rect x="323" y="1609.6" width="14" height="14" fill="rgb(173,173,179)"/><rect x="323" y="1623.6" width="14" height="14" fill="rgb(242,242,248)"/><rect x="337" y="1581.6" width="14" height="14" fill="rgb(228,228,234)"/><rect x="337" y="1595.6" width="14" height="14" fill="rgb(154,154,160)"/><rect x="337" y="1609.6" width="14" height="14" fill="rgb(210,210,216)"/><rect x="337" y="1623.6" width="14" height="14" fill="rgb(246,246,252)"/><rect x="351" y="1581.6" width="14" height="14" fill="rgb(241,241,247)"/><rect x="351" y="1595.6" width="14" height="14" fill="rgb(160,160,166)"/><rect x="351" y="1609.6" width="14" height="14" fill="rgb(173,173,179)"/><rect x="351" y="1623.6" width="14" height="14" fill="rgb(240,240,246)"/><rect x="365" y="1581.6" width="14" height="14" fill="rgb(249,249,255)"/><rect x="365" y="1595.6" width="14" height="14" fill="rgb(203,203,209)"/><rect x="365" y="1609.6" width="14" height="14" fill="rgb(194,194,200)"/><rect x="379" y="1581.6" width="14" height="14" fill="rgb(249,249,255)"/><rect x="379" y="1595.6" width="14" height="14" fill="rgb(168,168,174)"/><rect x="379" y="1609.6" width="14" height="14" fill="rgb(208,208,214)"/><rect x="379" y="1623.6" width="14" height="14" fill="rgb(245,245,251)"/><rect x="393" y="1581.6" width="14" height="14" fill="rgb(250,250,255)"/><rect x="393" y="1595.6" width="14" height="14" fill="rgb(168,168,174)"/><rect x="393" y="1609.6" width="14" height="14" fill="rgb(172,172,178)"/><rect x="407" y="1581.6" width="14" height="14" fill="rgb(233,233,239)"/><rect x="407" y="1595.6" width="14" height="14" fill="rgb(160,160,166)"/><rect x="407" y="1609.6" width="14" height="14" fill="rgb(187,187,193)"/><rect x="421" y="1581.6" width="11" height="14" fill="rgb(228,228,234)"/><rect x="421" y="1595.6" width="11" height="14" fill="rgb(166,166,172)"/><rect x="421" y="1609.6" width="11" height="14" fill="rgb(193,193,199)"/><rect x="421" y="1623.6" width="11" height="14" fill="rgb(248,248,254)"/><rect x="660" y="1581.6" width="14" height="14" fill="rgb(245,245,251)"/><rect x="660" y="1595.6" width="14" height="14" fill="rgb(170,170,176)"/><rect x="660" y="1609.6" width="14" height="14" fill="rgb(185,185,191)"/><rect x="660" y="1623.6" width="14" height="14" fill="rgb(239,239,245)"/><rect x="674" y="1581.6" width="14" height="14" fill="rgb(237,237,243)"/><rect x="674" y="1595.6" width="14" height="14" fill="rgb(163,163,169)"/><rect x="674" y="1609.6" width="14" height="14" fill="rgb(192,192,198)"/><rect x="674" y="1623.6" width="14" height="14" fill="rgb(243,243,249)"/><rect x="688" y="1581.6" width="14" height="14" fill="rgb(228,228,234)"/><rect x="688" y="1595.6" width="14" height="14" fill="rgb(171,171,177)"/><rect x="688" y="1609.6" width="14" height="14" fill="rgb(194,194,200)"/><rect x="688" y="1623.6" width="14" height="14" fill="rgb(240,240,246)"/><rect x="702" y="1581.6" width="14" height="14" fill="rgb(243,243,249)"/><rect x="702" y="1595.6" width="14" height="14" fill="rgb(167,167,173)"/><rect x="702" y="1609.6" width="14" height="14" fill="rgb(202,202,208)"/><rect x="702" y="1623.6" width="14" height="14" fill="rgb(244,244,250)"/><rect x="716" y="1581.6" width="14" height="14" fill="rgb(235,235,241)"/><rect x="716" y="1595.6" width="14" height="14" fill="rgb(182,182,188)"/><rect x="716" y="1609.6" width="14" height="14" fill="rgb(219,219,225)"/><rect x="716" y="1623.6" width="14" height="14" fill="rgb(238,238,244)"/><rect x="730" y="1581.6" width="14" height="14" fill="rgb(230,230,236)"/><rect x="730" y="1595.6" width="14" height="14" fill="rgb(166,166,172)"/><rect x="730" y="1609.6" width="14" height="14" fill="rgb(222,222,228)"/><rect x="730" y="1623.6" width="14" height="14" fill="rgb(240,240,246)"/><rect x="744" y="1581.6" width="14" height="14" fill="rgb(232,232,238)"/><rect x="744" y="1595.6" width="14" height="14" fill="rgb(175,175,181)"/><rect x="744" y="1609.6" width="14" height="14" fill="rgb(207,207,213)"/><rect x="744" y="1623.6" width="14" height="14" fill="rgb(239,239,245)"/><rect x="758" y="1581.6" width="14" height="14" fill="rgb(240,240,246)"/><rect x="758" y="1595.6" width="14" height="14" fill="rgb(151,151,157)"/><rect x="758" y="1609.6" width="14" height="14" fill="rgb(189,189,195)"/><rect x="758" y="1623.6" width="14" height="14" fill="rgb(247,247,253)"/><rect x="772" y="1581.6" width="14" height="14" fill="rgb(248,248,254)"/><rect x="772" y="1595.6" width="14" height="14" fill="rgb(164,164,170)"/><rect x="772" y="1609.6" width="14" height="14" fill="rgb(175,175,181)"/><rect x="786" y="1595.6" width="14" height="14" fill="rgb(159,159,165)"/><rect x="786" y="1609.6" width="14" height="14" fill="rgb(212,212,218)"/><rect x="786" y="1623.6" width="14" height="14" fill="rgb(250,250,255)"/><rect x="800" y="1595.6" width="14" height="14" fill="rgb(170,170,176)"/><rect x="800" y="1609.6" width="14" height="14" fill="rgb(216,216,222)"/><rect x="814" y="1581.6" width="14" height="14" fill="rgb(232,232,238)"/><rect x="814" y="1595.6" width="14" height="14" fill="rgb(168,168,174)"/><rect x="814" y="1609.6" width="14" height="14" fill="rgb(216,216,222)"/><rect x="814" y="1623.6" width="14" height="14" fill="rgb(242,242,248)"/><rect x="828" y="1581.6" width="14" height="14" fill="rgb(229,229,235)"/><rect x="828" y="1595.6" width="14" height="14" fill="rgb(202,202,208)"/><rect x="828" y="1609.6" width="14" height="14" fill="rgb(223,223,229)"/><rect x="842" y="1581.6" width="14" height="14" fill="rgb(248,248,254)"/><rect x="842" y="1595.6" width="14" height="14" fill="rgb(177,177,183)"/><rect x="842" y="1609.6" width="14" height="14" fill="rgb(216,216,222)"/><rect x="856" y="1581.6" width="14" height="14" fill="rgb(232,232,238)"/><rect x="856" y="1595.6" width="14" height="14" fill="rgb(183,183,189)"/><rect x="856" y="1609.6" width="14" height="14" fill="rgb(218,218,224)"/><rect x="870" y="1581.6" width="14" height="14" fill="rgb(246,246,252)"/><rect x="870" y="1595.6" width="14" height="14" fill="rgb(203,203,209)"/><rect x="870" y="1609.6" width="14" height="14" fill="rgb(222,222,228)"/><rect x="870" y="1623.6" width="14" height="14" fill="rgb(238,238,244)"/><rect x="884" y="1595.6" width="14" height="14" fill="rgb(193,193,199)"/><rect x="884" y="1609.6" width="14" height="14" fill="rgb(207,207,213)"/><rect x="884" y="1623.6" width="14" height="14" fill="rgb(245,245,251)"/><rect x="898" y="1581.6" width="14" height="14" fill="rgb(230,230,236)"/><rect x="898" y="1595.6" width="14" height="14" fill="rgb(151,151,157)"/><rect x="898" y="1609.6" width="14" height="14" fill="rgb(172,172,178)"/><rect x="898" y="1623.6" width="14" height="14" fill="rgb(242,242,248)"/><rect x="912" y="1581.6" width="14" height="14" fill="rgb(248,248,254)"/><rect x="912" y="1595.6" width="14" height="14" fill="rgb(173,173,179)"/><rect x="912" y="1609.6" width="14" height="14" fill="rgb(176,176,182)"/><rect x="912" y="1623.6" width="14" height="14" fill="rgb(250,250,255)"/><rect x="926" y="1595.6" width="14" height="14" fill="rgb(178,178,184)"/><rect x="926" y="1609.6" width="14" height="14" fill="rgb(205,205,211)"/><rect x="926" y="1623.6" width="14" height="14" fill="rgb(239,239,245)"/><rect x="940" y="1581.6" width="14" height="14" fill="rgb(248,248,254)"/><rect x="940" y="1595.6" width="14" height="14" fill="rgb(151,151,157)"/><rect x="940" y="1609.6" width="14" height="14" fill="rgb(210,210,216)"/><rect x="954" y="1581.6" width="14" height="14" fill="rgb(249,249,255)"/><rect x="954" y="1595.6" width="14" height="14" fill="rgb(165,165,171)"/><rect x="954" y="1609.6" width="14" height="14" fill="rgb(201,201,207)"/><rect x="954" y="1623.6" width="14" height="14" fill="rgb(246,246,252)"/><rect x="968" y="1581.6" width="14" height="14" fill="rgb(228,228,234)"/><rect x="968" y="1595.6" width="14" height="14" fill="rgb(179,179,185)"/><rect x="968" y="1609.6" width="14" height="14" fill="rgb(221,221,227)"/><rect x="968" y="1623.6" width="14" height="14" fill="rgb(240,240,246)"/><rect x="982" y="1581.6" width="14" height="14" fill="rgb(251,251,255)"/><rect x="982" y="1595.6" width="14" height="14" fill="rgb(182,182,188)"/><rect x="982" y="1609.6" width="14" height="14" fill="rgb(204,204,210)"/><rect x="982" y="1623.6" width="14" height="14" fill="rgb(240,240,246)"/><rect x="996" y="1581.6" width="14" height="14" fill="rgb(249,249,255)"/><rect x="996" y="1595.6" width="14" height="14" fill="rgb(183,183,189)"/><rect x="996" y="1609.6" width="14" height="14" fill="rgb(174,174,180)"/><rect x="1010" y="1581.6" width="14" height="14" fill="rgb(236,236,242)"/><rect x="1010" y="1595.6" width="14" height="14" fill="rgb(201,201,207)"/><rect x="1010" y="1609.6" width="14" height="14" fill="rgb(174,174,180)"/><rect x="1010" y="1623.6" width="14" height="14" fill="rgb(246,246,252)"/><rect x="1024" y="1581.6" width="14" height="14" fill="rgb(235,235,241)"/><rect x="1024" y="1595.6" width="14" height="14" fill="rgb(196,196,202)"/><rect x="1024" y="1609.6" width="14" height="14" fill="rgb(218,218,224)"/><rect x="1024" y="1623.6" width="14" height="14" fill="rgb(244,244,250)"/><rect x="1038" y="1581.6" width="6" height="14" fill="rgb(235,235,241)"/><rect x="1038" y="1595.6" width="6" height="14" fill="rgb(197,197,203)"/><rect x="1038" y="1609.6" width="6" height="14" fill="rgb(211,211,217)"/><rect x="267" y="1677.6" width="14" height="14" fill="rgb(243,243,249)"/><rect x="267" y="1691.6" width="14" height="14" fill="rgb(204,204,210)"/><rect x="267" y="1705.6" width="14" height="14" fill="rgb(194,194,200)"/><rect x="267" y="1719.6" width="14" height="14" fill="rgb(240,240,246)"/><rect x="281" y="1677.6" width="14" height="14" fill="rgb(243,243,249)"/><rect x="281" y="1691.6" width="14" height="14" fill="rgb(193,193,199)"/><rect x="281" y="1705.6" width="14" height="14" fill="rgb(188,188,194)"/><rect x="281" y="1719.6" width="14" height="14" fill="rgb(239,239,245)"/><rect x="295" y="1677.6" width="14" height="14" fill="rgb(247,247,253)"/><rect x="295" y="1691.6" width="14" height="14" fill="rgb(190,190,196)"/><rect x="295" y="1705.6" width="14" height="14" fill="rgb(211,211,217)"/><rect x="295" y="1719.6" width="14" height="14" fill="rgb(244,244,250)"/><rect x="309" y="1677.6" width="14" height="14" fill="rgb(230,230,236)"/><rect x="309" y="1691.6" width="14" height="14" fill="rgb(188,188,194)"/><rect x="309" y="1705.6" width="14" height="14" fill="rgb(179,179,185)"/><rect x="309" y="1719.6" width="14" height="14" fill="rgb(248,248,254)"/><rect x="323" y="1677.6" width="14" height="14" fill="rgb(236,236,242)"/><rect x="323" y="1691.6" width="14" height="14" fill="rgb(191,191,197)"/><rect x="323" y="1705.6" width="14" height="14" fill="rgb(217,217,223)"/><rect x="323" y="1719.6" width="14" height="14" fill="rgb(247,247,253)"/><rect x="337" y="1677.6" width="14" height="14" fill="rgb(247,247,253)"/><rect x="337" y="1691.6" width="14" height="14" fill="rgb(186,186,192)"/><rect x="337" y="1705.6" width="14" height="14" fill="rgb(178,178,184)"/><rect x="337" y="1719.6" width="14" height="14" fill="rgb(238,238,244)"/><rect x="351" y="1677.6" width="14" height="14" fill="rgb(243,243,249)"/><rect x="351" y="1691.6" width="14" height="14" fill="rgb(153,153,159)"/><rect x="351" y="1705.6" width="14" height="14" fill="rgb(201,201,207)"/><rect x="351" y="1719.6" width="14" height="14" fill="rgb(246,246,252)"/><rect x="365" y="1677.6" width="14" height="14" fill="rgb(239,239,245)"/><rect x="365" y="1691.6" width="14" height="14" fill="rgb(242,242,248)"/><rect x="365" y="1705.6" width="14" height="14" fill="rgb(251,251,255)"/><rect x="379" y="1677.6" width="14" height="14" fill="rgb(237,237,243)"/><rect x="379" y="1691.6" width="14" height="14" fill="rgb(179,179,185)"/><rect x="379" y="1705.6" width="14" height="14" fill="rgb(199,199,205)"/><rect x="393" y="1691.6" width="14" height="14" fill="rgb(157,157,163)"/><rect x="393" y="1705.6" width="14" height="14" fill="rgb(205,205,211)"/><rect x="393" y="1719.6" width="14" height="14" fill="rgb(244,244,250)"/><rect x="407" y="1677.6" width="14" height="14" fill="rgb(237,237,243)"/><rect x="407" y="1691.6" width="14" height="14" fill="rgb(155,155,161)"/><rect x="407" y="1705.6" width="14" height="14" fill="rgb(200,200,206)"/><rect x="407" y="1719.6" width="14" height="14" fill="rgb(238,238,244)"/><rect x="421" y="1677.6" width="14" height="14" fill="rgb(237,237,243)"/><rect x="421" y="1691.6" width="14" height="14" fill="rgb(179,179,185)"/><rect x="421" y="1705.6" width="14" height="14" fill="rgb(174,174,180)"/><rect x="435" y="1677.6" width="14" height="14" fill="rgb(242,242,248)"/><rect x="435" y="1691.6" width="14" height="14" fill="rgb(167,167,173)"/><rect x="435" y="1705.6" width="14" height="14" fill="rgb(194,194,200)"/><rect x="435" y="1719.6" width="14" height="14" fill="rgb(244,244,250)"/><rect x="449" y="1677.6" width="14" height="14" fill="rgb(234,234,240)"/><rect x="449" y="1691.6" width="14" height="14" fill="rgb(154,154,160)"/><rect x="449" y="1705.6" width="14" height="14" fill="rgb(207,207,213)"/><rect x="449" y="1719.6" width="14" height="14" fill="rgb(240,240,246)"/><rect x="463" y="1677.6" width="14" height="14" fill="rgb(232,232,238)"/><rect x="463" y="1691.6" width="14" height="14" fill="rgb(197,197,203)"/><rect x="463" y="1705.6" width="14" height="14" fill="rgb(203,203,209)"/><rect x="463" y="1719.6" width="14" height="14" fill="rgb(246,246,252)"/><rect x="477" y="1677.6" width="14" height="14" fill="rgb(239,239,245)"/><rect x="477" y="1691.6" width="14" height="14" fill="rgb(158,158,164)"/><rect x="477" y="1705.6" width="14" height="14" fill="rgb(208,208,214)"/><rect x="491" y="1677.6" width="14" height="14" fill="rgb(236,236,242)"/><rect x="491" y="1691.6" width="14" height="14" fill="rgb(157,157,163)"/><rect x="491" y="1705.6" width="14" height="14" fill="rgb(215,215,221)"/><rect x="491" y="1719.6" width="14" height="14" fill="rgb(249,249,255)"/><rect x="505" y="1677.6" width="14" height="14" fill="rgb(235,235,241)"/><rect x="505" y="1691.6" width="14" height="14" fill="rgb(181,181,187)"/><rect x="505" y="1705.6" width="14" height="14" fill="rgb(201,201,207)"/><rect x="505" y="1719.6" width="14" height="14" fill="rgb(250,250,255)"/><rect x="519" y="1677.6" width="14" height="14" fill="rgb(228,228,234)"/><rect x="519" y="1691.6" width="14" height="14" fill="rgb(160,160,166)"/><rect x="519" y="1705.6" width="14" height="14" fill="rgb(170,170,176)"/><rect x="533" y="1677.6" width="1" height="14" fill="rgb(249,249,255)"/><rect x="533" y="1691.6" width="1" height="14" fill="rgb(178,178,184)"/><rect x="533" y="1705.6" width="1" height="14" fill="rgb(195,195,201)"/><rect x="533" y="1719.6" width="1" height="14" fill="rgb(247,247,253)"/><rect x="660" y="1677.6" width="14" height="14" fill="rgb(251,251,255)"/><rect x="660" y="1691.6" width="14" height="14" fill="rgb(159,159,165)"/><rect x="660" y="1705.6" width="14" height="14" fill="rgb(196,196,202)"/><rect x="660" y="1719.6" width="14" height="14" fill="rgb(249,249,255)"/><rect x="674" y="1677.6" width="14" height="14" fill="rgb(240,240,246)"/><rect x="674" y="1691.6" width="14" height="14" fill="rgb(170,170,176)"/><rect x="674" y="1705.6" width="14" height="14" fill="rgb(177,177,183)"/><rect x="674" y="1719.6" width="14" height="14" fill="rgb(248,248,254)"/><rect x="688" y="1677.6" width="14" height="14" fill="rgb(228,228,234)"/><rect x="688" y="1691.6" width="14" height="14" fill="rgb(170,170,176)"/><rect x="688" y="1705.6" width="14" height="14" fill="rgb(218,218,224)"/><rect x="688" y="1719.6" width="14" height="14" fill="rgb(248,248,254)"/><rect x="702" y="1691.6" width="14" height="14" fill="rgb(175,175,181)"/><rect x="702" y="1705.6" width="14" height="14" fill="rgb(177,177,183)"/><rect x="702" y="1719.6" width="14" height="14" fill="rgb(244,244,250)"/><rect x="716" y="1677.6" width="14" height="14" fill="rgb(250,250,255)"/><rect x="716" y="1691.6" width="14" height="14" fill="rgb(150,150,156)"/><rect x="716" y="1705.6" width="14" height="14" fill="rgb(217,217,223)"/><rect x="716" y="1719.6" width="14" height="14" fill="rgb(247,247,253)"/><rect x="730" y="1677.6" width="14" height="14" fill="rgb(236,236,242)"/><rect x="730" y="1691.6" width="14" height="14" fill="rgb(173,173,179)"/><rect x="730" y="1705.6" width="14" height="14" fill="rgb(174,174,180)"/><rect x="730" y="1719.6" width="14" height="14" fill="rgb(250,250,255)"/><rect x="744" y="1677.6" width="14" height="14" fill="rgb(240,240,246)"/><rect x="744" y="1691.6" width="14" height="14" fill="rgb(205,205,211)"/><rect x="744" y="1705.6" width="14" height="14" fill="rgb(207,207,213)"/><rect x="744" y="1719.6" width="14" height="14" fill="rgb(240,240,246)"/><rect x="758" y="1677.6" width="14" height="14" fill="rgb(239,239,245)"/><rect x="758" y="1691.6" width="14" height="14" fill="rgb(177,177,183)"/><rect x="758" y="1705.6" width="14" height="14" fill="rgb(218,218,224)"/><rect x="758" y="1719.6" width="14" height="14" fill="rgb(246,246,252)"/><rect x="772" y="1677.6" width="14" height="14" fill="rgb(229,229,235)"/><rect x="772" y="1691.6" width="14" height="14" fill="rgb(167,167,173)"/><rect x="772" y="1705.6" width="14" height="14" fill="rgb(176,176,182)"/><rect x="772" y="1719.6" width="14" height="14" fill="rgb(239,239,245)"/><rect x="786" y="1691.6" width="14" height="14" fill="rgb(192,192,198)"/><rect x="786" y="1705.6" width="14" height="14" fill="rgb(188,188,194)"/><rect x="786" y="1719.6" width="14" height="14" fill="rgb(242,242,248)"/><rect x="800" y="1677.6" width="14" height="14" fill="rgb(235,235,241)"/><rect x="800" y="1691.6" width="14" height="14" fill="rgb(167,167,173)"/><rect x="800" y="1705.6" width="14" height="14" fill="rgb(197,197,203)"/><rect x="814" y="1677.6" width="14" height="14" fill="rgb(238,238,244)"/><rect x="814" y="1691.6" width="14" height="14" fill="rgb(162,162,168)"/><rect x="814" y="1705.6" width="14" height="14" fill="rgb(219,219,225)"/><rect x="814" y="1719.6" width="14" height="14" fill="rgb(249,249,255)"/><rect x="828" y="1691.6" width="14" height="14" fill="rgb(177,177,183)"/><rect x="828" y="1705.6" width="14" height="14" fill="rgb(171,171,177)"/><rect x="828" y="1719.6" width="14" height="14" fill="rgb(250,250,255)"/><rect x="842" y="1677.6" width="14" height="14" fill="rgb(245,245,251)"/><rect x="842" y="1691.6" width="14" height="14" fill="rgb(185,185,191)"/><rect x="842" y="1705.6" width="14" height="14" fill="rgb(183,183,189)"/><rect x="842" y="1719.6" width="14" height="14" fill="rgb(240,240,246)"/><rect x="856" y="1677.6" width="14" height="14" fill="rgb(229,229,235)"/><rect x="856" y="1691.6" width="14" height="14" fill="rgb(196,196,202)"/><rect x="856" y="1705.6" width="14" height="14" fill="rgb(196,196,202)"/><rect x="870" y="1677.6" width="14" height="14" fill="rgb(247,247,253)"/><rect x="870" y="1691.6" width="14" height="14" fill="rgb(198,198,204)"/><rect x="870" y="1705.6" width="14" height="14" fill="rgb(178,178,184)"/><rect x="870" y="1719.6" width="14" height="14" fill="rgb(247,247,253)"/><rect x="884" y="1677.6" width="14" height="14" fill="rgb(243,243,249)"/><rect x="884" y="1691.6" width="14" height="14" fill="rgb(153,153,159)"/><rect x="884" y="1705.6" width="14" height="14" fill="rgb(205,205,211)"/><rect x="884" y="1719.6" width="14" height="14" fill="rgb(242,242,248)"/><rect x="898" y="1677.6" width="14" height="14" fill="rgb(233,233,239)"/><rect x="898" y="1691.6" width="14" height="14" fill="rgb(180,180,186)"/><rect x="898" y="1705.6" width="14" height="14" fill="rgb(196,196,202)"/><rect x="898" y="1719.6" width="14" height="14" fill="rgb(248,248,254)"/><rect x="912" y="1677.6" width="14" height="14" fill="rgb(237,237,243)"/><rect x="912" y="1691.6" width="14" height="14" fill="rgb(169,169,175)"/><rect x="912" y="1705.6" width="14" height="14" fill="rgb(186,186,192)"/><rect x="912" y="1719.6" width="14" height="14" fill="rgb(246,246,252)"/><rect x="926" y="1677.6" width="14" height="14" fill="rgb(240,240,246)"/><rect x="926" y="1691.6" width="14" height="14" fill="rgb(191,191,197)"/><rect x="926" y="1705.6" width="14" height="14" fill="rgb(185,185,191)"/><rect x="926" y="1719.6" width="14" height="14" fill="rgb(247,247,253)"/><rect x="940" y="1677.6" width="14" height="14" fill="rgb(243,243,249)"/><rect x="940" y="1691.6" width="14" height="14" fill="rgb(185,185,191)"/><rect x="940" y="1705.6" width="14" height="14" fill="rgb(212,212,218)"/><rect x="940" y="1719.6" width="14" height="14" fill="rgb(250,250,255)"/><rect x="954" y="1677.6" width="14" height="14" fill="rgb(231,231,237)"/><rect x="954" y="1691.6" width="14" height="14" fill="rgb(160,160,166)"/><rect x="954" y="1705.6" width="14" height="14" fill="rgb(211,211,217)"/><rect x="954" y="1719.6" width="14" height="14" fill="rgb(243,243,249)"/><rect x="968" y="1677.6" width="14" height="14" fill="rgb(230,230,236)"/><rect x="968" y="1691.6" width="14" height="14" fill="rgb(163,163,169)"/><rect x="968" y="1705.6" width="14" height="14" fill="rgb(202,202,208)"/><rect x="982" y="1677.6" width="14" height="14" fill="rgb(245,245,251)"/><rect x="982" y="1691.6" width="14" height="14" fill="rgb(164,164,170)"/><rect x="982" y="1705.6" width="14" height="14" fill="rgb(198,198,204)"/><rect x="982" y="1719.6" width="14" height="14" fill="rgb(248,248,254)"/><rect x="996" y="1691.6" width="14" height="14" fill="rgb(178,178,184)"/><rect x="996" y="1705.6" width="14" height="14" fill="rgb(197,197,203)"/><rect x="996" y="1719.6" width="14" height="14" fill="rgb(242,242,248)"/><rect x="1010" y="1677.6" width="14" height="14" fill="rgb(245,245,251)"/><rect x="1010" y="1691.6" width="14" height="14" fill="rgb(162,162,168)"/><rect x="1010" y="1705.6" width="14" height="14" fill="rgb(185,185,191)"/><rect x="1010" y="1719.6" width="14" height="14" fill="rgb(240,240,246)"/><rect x="1024" y="1677.6" width="14" height="14" fill="rgb(233,233,239)"/><rect x="1024" y="1691.6" width="14" height="14" fill="rgb(171,171,177)"/><rect x="1024" y="1705.6" width="14" height="14" fill="rgb(205,205,211)"/><rect x="1024" y="1719.6" width="14" height="14" fill="rgb(240,240,246)"/><rect x="1038" y="1677.6" width="4" height="14" fill="rgb(238,238,244)"/><rect x="1038" y="1691.6" width="4" height="14" fill="rgb(165,165,171)"/><rect x="1038" y="1705.6" width="4" height="14" fill="rgb(193,193,199)"/><rect x="1038" y="1719.6" width="4" height="14" fill="rgb(246,246,252)"/><rect x="262" y="1787.6" width="14" height="14" fill="rgb(186,186,192)"/><rect x="262" y="1801.6" width="14" height="14" fill="rgb(182,182,188)"/><rect x="262" y="1815.6" width="14" height="14" fill="rgb(238,238,244)"/><rect x="276" y="1773.6" width="14" height="14" fill="rgb(251,251,255)"/><rect x="276" y="1787.6" width="14" height="14" fill="rgb(205,205,211)"/><rect x="276" y="1801.6" width="14" height="14" fill="rgb(196,196,202)"/><rect x="276" y="1815.6" width="14" height="14" fill="rgb(250,250,255)"/><rect x="290" y="1773.6" width="14" height="14" fill="rgb(241,241,247)"/><rect x="290" y="1787.6" width="14" height="14" fill="rgb(197,197,203)"/><rect x="290" y="1801.6" width="14" height="14" fill="rgb(203,203,209)"/><rect x="290" y="1815.6" width="14" height="14" fill="rgb(244,244,250)"/><rect x="304" y="1773.6" width="14" height="14" fill="rgb(240,240,246)"/><rect x="304" y="1787.6" width="14" height="14" fill="rgb(167,167,173)"/><rect x="304" y="1801.6" width="14" height="14" fill="rgb(191,191,197)"/><rect x="304" y="1815.6" width="14" height="14" fill="rgb(239,239,245)"/><rect x="318" y="1773.6" width="14" height="14" fill="rgb(243,243,249)"/><rect x="318" y="1787.6" width="14" height="14" fill="rgb(167,167,173)"/><rect x="318" y="1801.6" width="14" height="14" fill="rgb(206,206,212)"/><rect x="318" y="1815.6" width="14" height="14" fill="rgb(249,249,255)"/><rect x="332" y="1773.6" width="14" height="14" fill="rgb(232,232,238)"/><rect x="332" y="1787.6" width="14" height="14" fill="rgb(193,193,199)"/><rect x="332" y="1801.6" width="14" height="14" fill="rgb(202,202,208)"/><rect x="346" y="1773.6" width="14" height="14" fill="rgb(248,248,254)"/><rect x="346" y="1787.6" width="14" height="14" fill="rgb(200,200,206)"/><rect x="346" y="1801.6" width="14" height="14" fill="rgb(225,225,231)"/><rect x="346" y="1815.6" width="14" height="14" fill="rgb(244,244,250)"/><rect x="360" y="1773.6" width="14" height="14" fill="rgb(230,230,236)"/><rect x="360" y="1787.6" width="14" height="14" fill="rgb(167,167,173)"/><rect x="360" y="1801.6" width="14" height="14" fill="rgb(185,185,191)"/><rect x="360" y="1815.6" width="14" height="14" fill="rgb(250,250,255)"/><rect x="374" y="1773.6" width="14" height="14" fill="rgb(240,240,246)"/><rect x="374" y="1787.6" width="14" height="14" fill="rgb(191,191,197)"/><rect x="374" y="1801.6" width="14" height="14" fill="rgb(198,198,204)"/><rect x="374" y="1815.6" width="14" height="14" fill="rgb(251,251,255)"/><rect x="388" y="1773.6" width="14" height="14" fill="rgb(236,236,242)"/><rect x="388" y="1787.6" width="14" height="14" fill="rgb(237,237,243)"/><rect x="388" y="1801.6" width="14" height="14" fill="rgb(251,251,255)"/><rect x="388" y="1815.6" width="14" height="14" fill="rgb(236,236,242)"/><rect x="402" y="1773.6" width="14" height="14" fill="rgb(230,230,236)"/><rect x="402" y="1787.6" width="14" height="14" fill="rgb(175,175,181)"/><rect x="402" y="1801.6" width="14" height="14" fill="rgb(222,222,228)"/><rect x="416" y="1773.6" width="14" height="14" fill="rgb(242,242,248)"/><rect x="416" y="1787.6" width="14" height="14" fill="rgb(178,178,184)"/><rect x="416" y="1801.6" width="14" height="14" fill="rgb(185,185,191)"/><rect x="416" y="1815.6" width="14" height="14" fill="rgb(241,241,247)"/><rect x="430" y="1773.6" width="14" height="14" fill="rgb(235,235,241)"/><rect x="430" y="1787.6" width="14" height="14" fill="rgb(159,159,165)"/><rect x="430" y="1801.6" width="14" height="14" fill="rgb(179,179,185)"/><rect x="444" y="1773.6" width="14" height="14" fill="rgb(249,249,255)"/><rect x="444" y="1787.6" width="14" height="14" fill="rgb(156,156,162)"/><rect x="444" y="1801.6" width="14" height="14" fill="rgb(222,222,228)"/><rect x="458" y="1773.6" width="14" height="14" fill="rgb(230,230,236)"/><rect x="458" y="1787.6" width="14" height="14" fill="rgb(185,185,191)"/><rect x="458" y="1801.6" width="14" height="14" fill="rgb(219,219,225)"/><rect x="458" y="1815.6" width="14" height="14" fill="rgb(239,239,245)"/><rect x="472" y="1773.6" width="14" height="14" fill="rgb(228,228,234)"/><rect x="472" y="1787.6" width="14" height="14" fill="rgb(200,200,206)"/><rect x="472" y="1801.6" width="14" height="14" fill="rgb(178,178,184)"/><rect x="472" y="1815.6" width="14" height="14" fill="rgb(245,245,251)"/><rect x="486" y="1773.6" width="14" height="14" fill="rgb(246,246,252)"/><rect x="486" y="1787.6" width="14" height="14" fill="rgb(152,152,158)"/><rect x="486" y="1801.6" width="14" height="14" fill="rgb(211,211,217)"/><rect x="486" y="1815.6" width="14" height="14" fill="rgb(247,247,253)"/><rect x="500" y="1773.6" width="14" height="14" fill="rgb(232,232,238)"/><rect x="500" y="1787.6" width="14" height="14" fill="rgb(190,190,196)"/><rect x="500" y="1801.6" width="14" height="14" fill="rgb(186,186,192)"/><rect x="514" y="1773.6" width="7" height="14" fill="rgb(248,248,254)"/><rect x="514" y="1787.6" width="7" height="14" fill="rgb(177,177,183)"/><rect x="514" y="1801.6" width="7" height="14" fill="rgb(214,214,220)"/><rect x="514" y="1815.6" width="7" height="14" fill="rgb(241,241,247)"/><rect x="660" y="1773.6" width="14" height="14" fill="rgb(231,231,237)"/><rect x="660" y="1787.6" width="14" height="14" fill="rgb(154,154,160)"/><rect x="660" y="1801.6" width="14" height="14" fill="rgb(189,189,195)"/><rect x="674" y="1773.6" width="14" height="14" fill="rgb(246,246,252)"/><rect x="674" y="1787.6" width="14" height="14" fill="rgb(162,162,168)"/><rect x="674" y="1801.6" width="14" height="14" fill="rgb(194,194,200)"/><rect x="674" y="1815.6" width="14" height="14" fill="rgb(246,246,252)"/><rect x="688" y="1773.6" width="14" height="14" fill="rgb(235,235,241)"/><rect x="688" y="1787.6" width="14" height="14" fill="rgb(200,200,206)"/><rect x="688" y="1801.6" width="14" height="14" fill="rgb(208,208,214)"/><rect x="688" y="1815.6" width="14" height="14" fill="rgb(238,238,244)"/><rect x="702" y="1773.6" width="14" height="14" fill="rgb(228,228,234)"/><rect x="702" y="1787.6" width="14" height="14" fill="rgb(184,184,190)"/><rect x="702" y="1801.6" width="14" height="14" fill="rgb(189,189,195)"/><rect x="716" y="1773.6" width="14" height="14" fill="rgb(236,236,242)"/><rect x="716" y="1787.6" width="14" height="14" fill="rgb(170,170,176)"/><rect x="716" y="1801.6" width="14" height="14" fill="rgb(211,211,217)"/><rect x="716" y="1815.6" width="14" height="14" fill="rgb(245,245,251)"/><rect x="730" y="1773.6" width="14" height="14" fill="rgb(243,243,249)"/><rect x="730" y="1787.6" width="14" height="14" fill="rgb(183,183,189)"/><rect x="730" y="1801.6" width="14" height="14" fill="rgb(185,185,191)"/><rect x="744" y="1773.6" width="14" height="14" fill="rgb(235,235,241)"/><rect x="744" y="1787.6" width="14" height="14" fill="rgb(151,151,157)"/><rect x="744" y="1801.6" width="14" height="14" fill="rgb(196,196,202)"/><rect x="744" y="1815.6" width="14" height="14" fill="rgb(247,247,253)"/><rect x="758" y="1773.6" width="14" height="14" fill="rgb(229,229,235)"/><rect x="758" y="1787.6" width="14" height="14" fill="rgb(151,151,157)"/><rect x="758" y="1801.6" width="14" height="14" fill="rgb(182,182,188)"/><rect x="772" y="1773.6" width="14" height="14" fill="rgb(249,249,255)"/><rect x="772" y="1787.6" width="14" height="14" fill="rgb(191,191,197)"/><rect x="772" y="1801.6" width="14" height="14" fill="rgb(196,196,202)"/><rect x="772" y="1815.6" width="14" height="14" fill="rgb(240,240,246)"/><rect x="786" y="1773.6" width="14" height="14" fill="rgb(236,236,242)"/><rect x="786" y="1787.6" width="14" height="14" fill="rgb(164,164,170)"/><rect x="786" y="1801.6" width="14" height="14" fill="rgb(212,212,218)"/><rect x="786" y="1815.6" width="14" height="14" fill="rgb(251,251,255)"/><rect x="800" y="1773.6" width="14" height="14" fill="rgb(239,239,245)"/><rect x="800" y="1787.6" width="14" height="14" fill="rgb(164,164,170)"/><rect x="800" y="1801.6" width="14" height="14" fill="rgb(201,201,207)"/><rect x="800" y="1815.6" width="14" height="14" fill="rgb(239,239,245)"/><rect x="814" y="1773.6" width="14" height="14" fill="rgb(250,250,255)"/><rect x="814" y="1787.6" width="14" height="14" fill="rgb(171,171,177)"/><rect x="814" y="1801.6" width="14" height="14" fill="rgb(215,215,221)"/><rect x="814" y="1815.6" width="14" height="14" fill="rgb(251,251,255)"/><rect x="828" y="1773.6" width="14" height="14" fill="rgb(239,239,245)"/><rect x="828" y="1787.6" width="14" height="14" fill="rgb(193,193,199)"/><rect x="828" y="1801.6" width="14" height="14" fill="rgb(195,195,201)"/><rect x="828" y="1815.6" width="14" height="14" fill="rgb(244,244,250)"/><rect x="842" y="1773.6" width="14" height="14" fill="rgb(228,228,234)"/><rect x="842" y="1787.6" width="14" height="14" fill="rgb(201,201,207)"/><rect x="842" y="1801.6" width="14" height="14" fill="rgb(188,188,194)"/><rect x="856" y="1773.6" width="14" height="14" fill="rgb(230,230,236)"/><rect x="856" y="1787.6" width="14" height="14" fill="rgb(163,163,169)"/><rect x="856" y="1801.6" width="14" height="14" fill="rgb(201,201,207)"/><rect x="856" y="1815.6" width="14" height="14" fill="rgb(244,244,250)"/><rect x="870" y="1773.6" width="14" height="14" fill="rgb(237,237,243)"/><rect x="870" y="1787.6" width="14" height="14" fill="rgb(199,199,205)"/><rect x="870" y="1801.6" width="14" height="14" fill="rgb(222,222,228)"/><rect x="870" y="1815.6" width="14" height="14" fill="rgb(244,244,250)"/><rect x="884" y="1773.6" width="14" height="14" fill="rgb(235,235,241)"/><rect x="884" y="1787.6" width="14" height="14" fill="rgb(179,179,185)"/><rect x="884" y="1801.6" width="14" height="14" fill="rgb(184,184,190)"/><rect x="884" y="1815.6" width="14" height="14" fill="rgb(246,246,252)"/><rect x="898" y="1787.6" width="14" height="14" fill="rgb(168,168,174)"/><rect x="898" y="1801.6" width="14" height="14" fill="rgb(176,176,182)"/><rect x="912" y="1773.6" width="14" height="14" fill="rgb(247,247,253)"/><rect x="912" y="1787.6" width="14" height="14" fill="rgb(161,161,167)"/><rect x="912" y="1801.6" width="14" height="14" fill="rgb(184,184,190)"/><rect x="926" y="1773.6" width="14" height="14" fill="rgb(241,241,247)"/><rect x="926" y="1787.6" width="14" height="14" fill="rgb(192,192,198)"/><rect x="926" y="1801.6" width="14" height="14" fill="rgb(173,173,179)"/><rect x="926" y="1815.6" width="14" height="14" fill="rgb(242,242,248)"/><rect x="940" y="1773.6" width="14" height="14" fill="rgb(240,240,246)"/><rect x="940" y="1787.6" width="14" height="14" fill="rgb(153,153,159)"/><rect x="940" y="1801.6" width="14" height="14" fill="rgb(183,183,189)"/><rect x="940" y="1815.6" width="14" height="14" fill="rgb(238,238,244)"/><rect x="954" y="1773.6" width="14" height="14" fill="rgb(247,247,253)"/><rect x="954" y="1787.6" width="14" height="14" fill="rgb(159,159,165)"/><rect x="954" y="1801.6" width="14" height="14" fill="rgb(196,196,202)"/><rect x="954" y="1815.6" width="14" height="14" fill="rgb(239,239,245)"/><rect x="968" y="1773.6" width="14" height="14" fill="rgb(250,250,255)"/><rect x="968" y="1787.6" width="14" height="14" fill="rgb(153,153,159)"/><rect x="968" y="1801.6" width="14" height="14" fill="rgb(181,181,187)"/><rect x="968" y="1815.6" width="14" height="14" fill="rgb(250,250,255)"/><rect x="982" y="1773.6" width="14" height="14" fill="rgb(242,242,248)"/><rect x="982" y="1787.6" width="14" height="14" fill="rgb(195,195,201)"/><rect x="982" y="1801.6" width="14" height="14" fill="rgb(190,190,196)"/><rect x="982" y="1815.6" width="14" height="14" fill="rgb(241,241,247)"/><rect x="996" y="1773.6" width="14" height="14" fill="rgb(230,230,236)"/><rect x="996" y="1787.6" width="14" height="14" fill="rgb(160,160,166)"/><rect x="996" y="1801.6" width="14" height="14" fill="rgb(191,191,197)"/><rect x="996" y="1815.6" width="14" height="14" fill="rgb(244,244,250)"/><rect x="1010" y="1773.6" width="14" height="14" fill="rgb(233,233,239)"/><rect x="1010" y="1787.6" width="14" height="14" fill="rgb(191,191,197)"/><rect x="1010" y="1801.6" width="14" height="14" fill="rgb(203,203,209)"/><rect x="1024" y="1773.6" width="14" height="14" fill="rgb(229,229,235)"/><rect x="1024" y="1787.6" width="14" height="14" fill="rgb(169,169,175)"/><rect x="1024" y="1801.6" width="14" height="14" fill="rgb(212,212,218)"/><rect x="1024" y="1815.6" width="14" height="14" fill="rgb(250,250,255)"/><rect x="1038" y="1787.6" width="6" height="14" fill="rgb(173,173,179)"/><rect x="1038" y="1801.6" width="6" height="14" fill="rgb(191,191,197)"/></svg>
<div style="position:absolute;left:1544px;top:361px;width:600px;height:511px;background:#fff;border:2px solid #d1d7e1;box-sizing:border-box;box-shadow:0 5px 5px -3px rgba(0,0,0,.2),0 8px 10px 1px rgba(0,0,0,.14),0 3px 14px 2px rgba(0,0,0,.12)"></div>
<div class="t " style="left:1578px;top:385.2px;font-size:34px;color:#101a2e;font-weight:400;letter-spacing:0px">Today</div>
<div class="t " style="left:1578px;top:465.2px;font-size:34px;color:#101a2e;font-weight:400;letter-spacing:0px">Yesterday</div>
<div class="t " style="left:1578px;top:545.2px;font-size:34px;color:#101a2e;font-weight:400;letter-spacing:0px">This week</div>
<div class="t " style="left:1578px;top:625.2px;font-size:34px;color:#101a2e;font-weight:400;letter-spacing:0px">Previous week</div>
<div class="t " style="left:1578px;top:705.2px;font-size:34px;color:#101a2e;font-weight:400;letter-spacing:0px">This month</div>
<div class="t " style="left:1578px;top:785.2px;font-size:34px;color:#101a2e;font-weight:400;letter-spacing:0px">Previous month</div>
<div style="position:absolute;left:1546px;top:843px;width:596px;height:27px;background:#182862"></div>
<div style="position:absolute;left:1586px;top:868px;width:8px;height:2px;background:#fff;border-radius:4px 4px 0 0"></div>

</body></html>
